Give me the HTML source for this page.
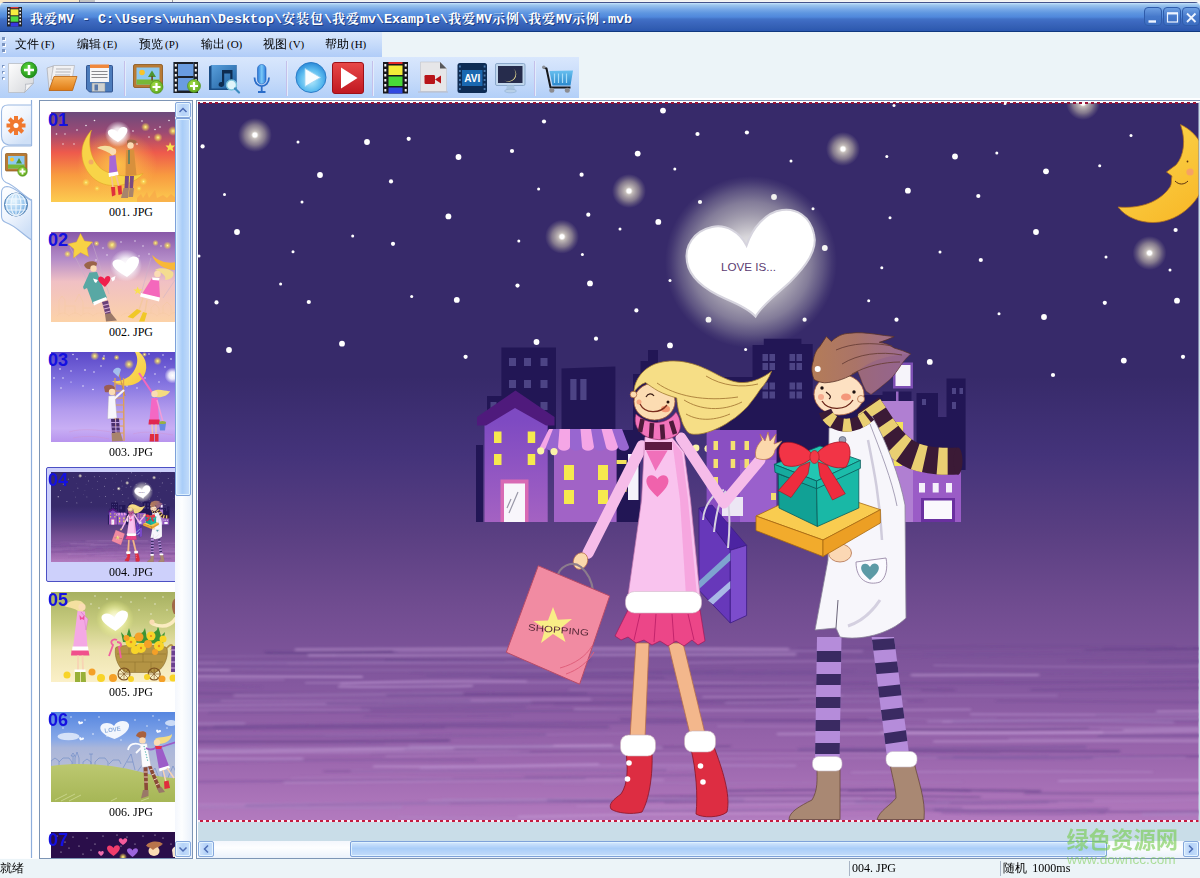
<!DOCTYPE html>
<html lang="zh-CN">
<head>
<meta charset="utf-8">
<title>我爱MV</title>
<style>
*{box-sizing:border-box;margin:0;padding:0}
html,body{width:1200px;height:878px;overflow:hidden;background:#ecf4f8}
body{position:relative;font-family:"Liberation Sans","WenQuanYi Zen Hei","Noto Sans CJK SC",sans-serif;font-size:12px;color:#000}
.abs{position:absolute}
#topstrip{left:0;top:0;width:1200px;height:3px;background:linear-gradient(#efefed,#fbfbfb)}
#topstrip i{position:absolute;top:0;height:3px;display:block}
#title{left:0;top:2px;width:1200px;height:30px;border-radius:5px 5px 0 0;
 background:linear-gradient(#44548c 0,#44548c 1px,#c8e4fc 1px,#9cc6ee 3px,#7aaae8 7px,#5e96e0 11px,#5088dc 15px,#4272c6 17px,#3c68c0 20px,#3460b4 25px,#2c58b0 28.500px,#103880 29px,#103880 30px);}
#title .t{position:absolute;left:30px;top:8.500px;white-space:nowrap;color:#fff;font-weight:bold;font-size:13px;letter-spacing:1px;line-height:18px;font-family:"Liberation Mono","Noto Serif CJK SC",serif;text-shadow:1px 1px 0 #1d3f86}
#title .t b{font-size:13.34px;font-weight:bold;letter-spacing:0}
.wb{position:absolute;top:5px;width:18px;height:19px;border-radius:4px;border:1px solid #2f5cab;background:linear-gradient(#6d9fe2,#4679cb 50%,#3c6dc0)}
#menubar{left:0;top:32px;width:382px;height:25px;background:linear-gradient(#dae8fd,#c6dbfa 50%,#b0ccf8)}
#menubar span{position:absolute;top:5px;font-size:12px;line-height:14px;white-space:nowrap}
#menubar span i{font-style:normal;font-family:"Liberation Serif",serif;font-size:11px;letter-spacing:0;margin-left:2px}
#status i{font-style:normal;font-family:"Liberation Serif",serif;font-size:12px}
#toolbar{left:0;top:57px;width:579px;height:41px;background:linear-gradient(#d9e7fd,#c6dbfa 55%,#b2cff8)}
.grip{position:absolute;left:2px;width:2.500px;height:2.500px;background:#7a94c0;box-shadow:1px 1px 0 #fff}
.sep{position:absolute;top:62px;width:1px;height:32px;background:#a9c1e6;box-shadow:1px 0 0 #e6f0fc}
#lefttabs{left:0;top:100px;width:39px;height:758px;background:#fff}
#thumbs{left:39px;top:100px;width:154px;height:759px;background:#fff;border:1px solid #7d95b5;overflow:hidden}
.th{position:absolute;left:11px;width:125px;height:90px;overflow:hidden}
.num{position:absolute;left:8px;font:bold 18px/18px "Liberation Sans",sans-serif;color:#1410e0}
.lab{position:absolute;left:56px;width:70px;text-align:center;font:12px/14px "Liberation Serif",serif;color:#000}
#vscroll{left:175px;top:101px;width:17px;height:757px;background:linear-gradient(90deg,#f4f7fd,#fdfeff 40%,#eaf1fb)}
.sbtn{position:absolute;border:1px solid #86a8dc;border-radius:2px;background:linear-gradient(90deg,#d4e6fc,#b4d2f8 50%,#c6defa);box-shadow:inset 0 0 0 1px #e4f4ff}
.sthumbv{position:absolute;border:1px solid #7ea2da;border-radius:2px;background:linear-gradient(90deg,#d6e8fd,#a9cdf8 45%,#c4dcfa);box-shadow:inset 0 0 0 1px #dff2ff}
.sthumbh{position:absolute;border:1px solid #7ea2da;border-radius:2px;background:linear-gradient(#d6e8fd,#a9cdf8 45%,#c4dcfa);box-shadow:inset 0 0 0 1px #dff2ff}
#hscroll{left:198px;top:841px;width:1002px;height:17px;background:linear-gradient(#f4f7fd,#fdfeff 40%,#eaf1fb)}
#main{left:196px;top:100px;width:1010px;height:759px;background:#c9dde8;border:1px solid #7d95b5;box-shadow:inset 1px 1px 0 #fff}
#status{left:0;top:859px;width:1200px;height:19px;background:#ecf4f8}
#status span{position:absolute;top:2px;font-size:12px;line-height:14px;white-space:nowrap}
#status b{position:absolute;top:2px;width:1px;height:15px;background:#a8b4c4}
</style>
</head>
<body>
<div id="topstrip" class="abs"><i style="left:0;width:79px;background:#f6e7c9"></i><i style="left:79px;width:1px;background:#8a8a8a"></i><i style="left:80px;width:15px;background:#c4c4c4"></i><i style="left:172px;width:1px;background:#9a9a9a"></i></div>
<div id="title" class="abs">
 <div class="t">我爱<b>MV - C:\Users\wuhan\Desktop\</b>安装包<b>\</b>我爱<b>mv\Example\</b>我爱<b>MV</b>示例<b>\</b>我爱<b>MV</b>示例<b>.mvb</b></div>
 <svg viewBox="0 0 16 20" width="16" height="20" style="position:absolute;left:7px;top:5px"><rect x="0" y="0" width="15" height="19.500" fill="#22242c"/><path d="M1 1.500h1.600v1.800h-1.600zM1 5h1.600v1.800h-1.600zM1 8.500h1.600v1.800h-1.600zM1 12h1.600v1.800h-1.600zM1 15.500h1.600v1.800h-1.600zM12.400 1.500h1.600v1.800h-1.600zM12.400 5h1.600v1.800h-1.600zM12.400 8.500h1.600v1.800h-1.600zM12.400 12h1.600v1.800h-1.600zM12.400 15.500h1.600v1.800h-1.600z" fill="#f0f0f0"/><rect x="3.600" y="0" width="7.800" height="1.300" fill="#e04040"/><rect x="3.600" y="2.300" width="7.800" height="6" fill="#f6ee40"/><rect x="3.600" y="9.300" width="7.800" height="5.400" fill="#50dc40"/><rect x="3.600" y="15.700" width="7.800" height="3.800" fill="#3838e0"/></svg><div class="wb" style="left:1144px"></div><div class="wb" style="left:1163px"></div><div class="wb" style="left:1182px"></div><svg viewBox="1144 2 56 30" width="56" height="30" style="position:absolute;left:1144px;top:0"><path d="M1148.500 21.500H1156" stroke="#eef4ff" stroke-width="2.400"/><rect x="1167.500" y="13.500" width="10" height="8.500" fill="none" stroke="#eef4ff" stroke-width="1.200"/><path d="M1167 13.300H1178" stroke="#eef4ff" stroke-width="2.200"/><path d="M1187 13.500L1195.500 22M1195.500 13.500L1187 22" stroke="#eef4ff" stroke-width="1.900"/></svg>
</div>
<div id="menubar" class="abs"><b class="grip" style="top:5px"></b><b class="grip" style="top:11px"></b><b class="grip" style="top:17px"></b>
 <span style="left:15px">文件<i>(F)</i></span><span style="left:77px">编辑<i>(E)</i></span><span style="left:139px">预览<i>(P)</i></span><span style="left:201px">输出<i>(O)</i></span><span style="left:263px">视图<i>(V)</i></span><span style="left:325px">帮助<i>(H)</i></span>
</div>
<div id="toolbar" class="abs"><svg viewBox="0 57 579 41" width="579" height="41" style="position:absolute;left:0;top:0;display:block">
<defs>
<linearGradient id="tg1" x1="0" y1="0" x2="1" y2="1"><stop offset="0" stop-color="#fefefe"/><stop offset="1" stop-color="#d4d6da"/></linearGradient>
<radialGradient id="tgreen" cx=".4" cy=".35" r=".7"><stop offset="0" stop-color="#5cd83c"/><stop offset="1" stop-color="#1a8a16"/></radialGradient>
<radialGradient id="tgreen2" cx=".4" cy=".35" r=".7"><stop offset="0" stop-color="#a8e048"/><stop offset="1" stop-color="#5aa41c"/></radialGradient>
<linearGradient id="tor" x1="0" y1="0" x2="0" y2="1"><stop offset="0" stop-color="#f8b45c"/><stop offset="1" stop-color="#e07c14"/></linearGradient>
<radialGradient id="tplay" cx=".5" cy=".6" r=".6"><stop offset="0" stop-color="#b8ecfc"/><stop offset=".6" stop-color="#5cbcf0"/><stop offset="1" stop-color="#2a8ad8"/></radialGradient>
<linearGradient id="tred" x1="0" y1="0" x2="0" y2="1"><stop offset="0" stop-color="#e84848"/><stop offset="1" stop-color="#c01820"/></linearGradient>
<linearGradient id="tmic" x1="0" y1="0" x2="1" y2="0"><stop offset="0" stop-color="#2a78d8"/><stop offset=".5" stop-color="#78c8f8"/><stop offset="1" stop-color="#2a78d8"/></linearGradient>
<linearGradient id="tbook" x1="0" y1="0" x2="1" y2="1"><stop offset="0" stop-color="#5aa0dc"/><stop offset="1" stop-color="#1c5c9c"/></linearGradient>
<linearGradient id="tcart" x1="0" y1="0" x2="0" y2="1"><stop offset="0" stop-color="#68c0f0"/><stop offset="1" stop-color="#2a88cc"/></linearGradient>
</defs>
<!-- grip -->
<g fill="#7a94c0"><rect x="2" y="65" width="2.500" height="2.500"/><rect x="2" y="71" width="2.500" height="2.500"/><rect x="2" y="77" width="2.500" height="2.500"/></g>
<g fill="#fff"><rect x="3" y="66" width="2" height="2"/><rect x="3" y="72" width="2" height="2"/><rect x="3" y="78" width="2" height="2"/></g>
<!-- separators -->
<path d="M124.500 61V96M286.500 61V96M372.500 61V96M534.500 61V96" stroke="#c4c0ea" stroke-width="1"/>
<path d="M125.500 61V96M287.500 61V96M373.500 61V96M535.500 61V96" stroke="#e2ecfc" stroke-width="1"/>
<!-- 1 new doc -->
<path d="M8.500 63.500H33.500V83L24.500 92.500H8.500Z" fill="url(#tg1)" stroke="#b8bcc4" stroke-width=".8"/>
<path d="M33.500 83C30 84 27 84.500 25.500 84C26 87 25.500 90 24.500 92.500Z" fill="#f4f4f6" stroke="#a8acb4" stroke-width=".7"/>
<circle cx="29" cy="70" r="8" fill="url(#tgreen)" stroke="#157a14" stroke-width=".6"/>
<path d="M24 70H34M29 65V75" stroke="#fff" stroke-width="2.600"/>
<!-- 2 open folder -->
<path d="M47 68L53 66L55 89H49Z" fill="#e8e8ea" stroke="#a0a0a4" stroke-width=".6"/>
<path d="M53.500 65.500L74.500 65.500L72 80H51Z" fill="#f2f2f4" stroke="#a8a8ac" stroke-width=".6"/>
<path d="M56 69H71M55.500 72H70.500M55 75H70" stroke="#b4b4b8" stroke-width="1"/>
<path d="M54 76.500H77L72.500 90.500H49Z" fill="url(#tor)" stroke="#b8600c" stroke-width=".8"/>
<!-- 3 floppy -->
<path d="M86.500 66.500Q86.500 65.500 87.500 65.500H111.500Q112.500 65.500 112.500 66.500V91Q112.500 92 111.500 92H89.500L86.500 89Z" fill="#4c7cbc" stroke="#2a4c88" stroke-width=".9"/>
<rect x="90" y="65" width="19" height="17" fill="#f6f6f8"/>
<rect x="90" y="64.500" width="19" height="3.500" fill="#f0883c"/>
<path d="M91.500 71.500H107.500M91.500 74.500H107.500M91.500 77.500H107.500" stroke="#5a5a60" stroke-width=".7"/>
<rect x="92" y="83" width="13" height="8.500" fill="#d0d2d0" stroke="#8a8c8c" stroke-width=".5"/>
<rect x="94.500" y="84.500" width="3.500" height="6" fill="#5a78a8"/>
<!-- 4 picture + -->
<rect x="133.500" y="64.500" width="29" height="23" rx="1.500" fill="#b87a34" stroke="#8a5418" stroke-width=".8"/>
<rect x="136.500" y="67.500" width="23" height="17" fill="#8cc8f0"/>
<rect x="136.500" y="79.500" width="23" height="5" fill="#78b838"/>
<circle cx="142" cy="72.500" r="2.800" fill="#f8c428"/>
<path d="M152 70.500L156 77H148Z" fill="#4c9430"/><rect x="151.300" y="76" width="1.600" height="4.500" fill="#6a4a20"/>
<circle cx="156.500" cy="87" r="6.500" fill="url(#tgreen2)" stroke="#4a8c14" stroke-width=".6"/>
<path d="M152.500 87H160.500M156.500 83V91" stroke="#fff" stroke-width="2.200"/>
<!-- 5 film + -->
<rect x="173.500" y="62" width="24.500" height="31" fill="#6a9ce0"/>
<rect x="173.500" y="62" width="4.500" height="31" fill="#1c2028"/><rect x="193.500" y="62" width="4.500" height="31" fill="#1c2028"/>
<path d="M174.800 64h2v2.500h-2zM174.800 69h2v2.500h-2zM174.800 74h2v2.500h-2zM174.800 79h2v2.500h-2zM174.800 84h2v2.500h-2zM174.800 89h2v2.500h-2zM194.800 64h2v2.500h-2zM194.800 69h2v2.500h-2zM194.800 74h2v2.500h-2zM194.800 79h2v2.500h-2z" fill="#f4f4f4"/>
<path d="M178 62h15.500v2h-15.500zM178 76h15.500v2h-15.500zM178 90.500h15.500v2.500h-15.500z" fill="#1c2028"/>
<circle cx="194" cy="86" r="6.500" fill="url(#tgreen2)" stroke="#4a8c14" stroke-width=".6"/>
<path d="M190 86H198M194 82V90" stroke="#fff" stroke-width="2.200"/>
<!-- 6 music book -->
<path d="M209 66.500L212 65H236.500V88.500L233.500 90H209Z" fill="#1a4c84"/>
<rect x="211.500" y="65" width="25" height="23.500" fill="url(#tbook)"/>
<path d="M222 70H232.500V82.500A2.800 2.500 0 1 1 230.300 80V73.500H224.200V84.500A2.800 2.500 0 1 1 222 82Z" fill="#0e2c50"/>
<circle cx="231.500" cy="85" r="5" fill="#dff4fa" stroke="#7cc4dc" stroke-width="1.400"/>
<path d="M235 88.500L239 92.500" stroke="#3a8cc0" stroke-width="2.200" stroke-linecap="round"/>
<!-- 7 mic -->
<path d="M254.500 77.500C254.500 89 269 89 269 77.500" stroke="#2a6cc8" stroke-width="1.800" fill="none"/>
<path d="M261.700 86.500V91.500M258 92H265.500" stroke="#2a6cc8" stroke-width="1.800"/>
<rect x="257.500" y="64.500" width="8.500" height="19.500" rx="4.250" fill="url(#tmic)" stroke="#1c5cb8" stroke-width=".6"/>
<!-- 8 play -->
<circle cx="311" cy="77.500" r="15" fill="url(#tplay)" stroke="#2a7cc8" stroke-width="1"/>
<path d="M305 68.500L320.500 77.500L305 86.500Z" fill="#f8fcff" stroke="#9cd4f4" stroke-width=".8"/>
<!-- 9 red play -->
<rect x="332.500" y="62.500" width="31" height="31" rx="2.500" fill="url(#tred)" stroke="#9c1018" stroke-width="1"/>
<path d="M341 67.500L357.500 78L341 88.500Z" fill="#fff"/>
<!-- 10 colour film -->
<rect x="383" y="62" width="25" height="31.500" fill="#18181c"/>
<path d="M384.300 64h2v2.500h-2zM384.300 69h2v2.500h-2zM384.300 74h2v2.500h-2zM384.300 79h2v2.500h-2zM384.300 84h2v2.500h-2zM384.300 89h2v2.500h-2zM404.700 64h2v2.500h-2zM404.700 69h2v2.500h-2zM404.700 74h2v2.500h-2zM404.700 79h2v2.500h-2zM404.700 84h2v2.500h-2zM404.700 89h2v2.500h-2z" fill="#f4f4f4"/>
<rect x="388.500" y="62" width="14" height="2" fill="#e02828"/>
<rect x="388.500" y="65.500" width="14" height="9.500" fill="#f4ec38"/>
<rect x="388.500" y="76.500" width="14" height="9.500" fill="#48d838"/>
<rect x="388.500" y="87.500" width="14" height="6" fill="#3048e0"/>
<!-- 11 video doc -->
<path d="M420.500 62H440L446.500 68.500V91.500H420.500Z" fill="#e6e6e8" stroke="#c4c4c8" stroke-width=".6"/>
<path d="M440 62L446.500 68.500H440Z" fill="#58585c"/>
<path d="M418 92H448" stroke="#b8bcc8" stroke-width="1"/>
<rect x="424.500" y="75" width="10.500" height="9" rx="1.200" fill="#b81418"/>
<path d="M435 79.500L441 75.500V83.500Z" fill="#b81418"/>
<!-- 12 AVI -->
<rect x="457.500" y="63" width="29.500" height="30" rx="2.500" fill="#0e2c54"/>
<rect x="462" y="70" width="20.500" height="16" fill="#1a68b0"/>
<path d="M459 65.500h1.800v2h-1.800zM459 70h1.800v2h-1.800zM459 74.500h1.800v2h-1.800zM459 79h1.800v2h-1.800zM459 83.500h1.800v2h-1.800zM459 88h1.800v2h-1.800zM483.700 65.500h1.800v2h-1.800zM483.700 70h1.800v2h-1.800zM483.700 74.500h1.800v2h-1.800zM483.700 79h1.800v2h-1.800zM483.700 83.500h1.800v2h-1.800zM483.700 88h1.800v2h-1.800z" fill="#4c7cb0"/>
<text x="472.300" y="82" text-anchor="middle" font-family="Liberation Sans,sans-serif" font-weight="bold" font-size="10.500" fill="#fff" textLength="16" lengthAdjust="spacingAndGlyphs">AVI</text>
<!-- 13 monitor -->
<rect x="495.500" y="63.500" width="29.500" height="22" rx="1.500" fill="#c0d6ec" stroke="#7c9cc0" stroke-width=".8"/>
<rect x="498" y="66" width="24.500" height="17" fill="#262c4c"/>
<path d="M513.500 68.500A7.200 7.200 0 1 1 504 80A7.500 7.500 0 0 0 513.500 68.500Z" fill="#f8ec98"/>
<path d="M507 85.500H514L515 90H506Z" fill="#a8c4e0"/>
<ellipse cx="510.500" cy="91" rx="6" ry="1.800" fill="#b8d0e8" stroke="#88a8cc" stroke-width=".5"/>
<!-- 14 cart -->
<path d="M543.500 67.500L546.500 68.500L550.500 87.500H570.500" stroke="#16181c" stroke-width="2" fill="none" stroke-linejoin="round"/>
<circle cx="543.800" cy="67.300" r="1.800" fill="#8c9098"/>
<path d="M549.500 71L573 70.500L570.500 85.500H552.500Z" fill="url(#tcart)"/>
<path d="M554.500 73.500V83M558.500 73.500V83M562.500 73.500V83M566.500 73.500V83" stroke="#a8dcf8" stroke-width="1.200"/>
<circle cx="551.800" cy="90.200" r="2.500" fill="#8c8c90"/><circle cx="567.300" cy="90.200" r="2.500" fill="#8c8c90"/>
</svg>
</div>
<div class="abs" style="left:0;top:98px;width:1200px;height:761px;background:#fdfeff"></div>
<div id="lefttabs" class="abs"><svg viewBox="0 100 39 758" width="39" height="758" style="position:absolute;left:0;top:0;display:block">
<defs>
<linearGradient id="lt1" x1="0" y1="0" x2=".6" y2="1"><stop offset="0" stop-color="#ffffff"/><stop offset=".55" stop-color="#eef4fd"/><stop offset="1" stop-color="#cfe0f7"/></linearGradient>
<radialGradient id="lglobe" cx=".4" cy=".35" r=".75"><stop offset="0" stop-color="#e8f6fe"/><stop offset=".6" stop-color="#9cc8ee"/><stop offset="1" stop-color="#5a90c8"/></radialGradient>
<radialGradient id="lgreen" cx=".4" cy=".35" r=".7"><stop offset="0" stop-color="#a8e048"/><stop offset="1" stop-color="#5aa41c"/></radialGradient>
</defs>
<path d="M31.500 100V858" stroke="#8eaedc" stroke-width="1.200" fill="none"/>
<!-- tab1 -->
<path d="M31.500 105H8Q1.500 105 1.500 111.500V136Q1.500 144 9 145H31.500Z" fill="url(#lt1)" stroke="#9ab8e2" stroke-width="1.100"/>
<!-- tab3 -->
<path d="M31.500 200.500C22 196 16 187 7 186.500Q1.500 187 1.500 192.500V216Q1.500 221 6 222.500C16 226 22 234 31.500 240Z" fill="url(#lt1)" stroke="#9ab8e2" stroke-width="1.100"/>
<!-- tab2 active -->
<path d="M33 146H8Q1.500 146 1.500 152V174Q1.500 180 6 182.500C16 186 22 195 33 200Z" fill="#fff"/>
<path d="M31.500 146H8Q1.500 146 1.500 152V174Q1.500 180 6 182.500C16 186 22 195 31.500 200" fill="none" stroke="#9ab8e2" stroke-width="1.100"/>
<!-- gear -->
<g transform="translate(16 125.500)" fill="#f0782e">
<g id="tooth"><rect x="-2" y="-9.500" width="4" height="5"/></g>
<use href="#tooth" transform="rotate(45)"/><use href="#tooth" transform="rotate(90)"/><use href="#tooth" transform="rotate(135)"/><use href="#tooth" transform="rotate(180)"/><use href="#tooth" transform="rotate(225)"/><use href="#tooth" transform="rotate(270)"/><use href="#tooth" transform="rotate(315)"/>
<circle r="6.200"/><circle r="2.500" fill="#fff"/>
</g>
<!-- picture -->
<rect x="5.500" y="153.500" width="21.500" height="17.500" rx="1" fill="#b87a34" stroke="#8a5418" stroke-width=".7"/>
<rect x="8" y="156" width="16.500" height="12.500" fill="#8cc8f0"/>
<rect x="8" y="164.500" width="16.500" height="4" fill="#78b838"/>
<circle cx="12" cy="159.500" r="2" fill="#f8c428"/>
<path d="M19 158L22 163.500H16Z" fill="#4c9430"/>
<circle cx="22.500" cy="171.500" r="4.800" fill="url(#lgreen)" stroke="#4a8c14" stroke-width=".5"/>
<path d="M19.500 171.500H25.500M22.500 168.500V174.500" stroke="#fff" stroke-width="1.800"/>
<!-- globe -->
<circle cx="16" cy="204.500" r="11.500" fill="url(#lglobe)" stroke="#4c7cb0" stroke-width="1"/>
<g fill="none" stroke="#f4faff" stroke-width="1.100" opacity=".9"><ellipse cx="16" cy="204.500" rx="5" ry="11"/><path d="M16 193.500V215.500M5 204.500H27M6.500 199H25.500M6.500 210H25.500"/><ellipse cx="16" cy="204.500" rx="9.500" ry="11"/></g>
</svg>
</div>
<div id="thumbs" class="abs"><div style="position:absolute;left:6px;top:366px;width:160px;height:115px;border:1px solid #4c50c4;border-radius:2px;background:#cdd0fb"></div>
<svg class="th" style="top:11px" width="125" height="90" viewBox="0 0 125 90" >
<defs><linearGradient id="t1g" x1="0" y1="0" x2="0" y2="1"><stop offset="0" stop-color="#6c4a7c"/><stop offset=".22" stop-color="#9a4a74"/><stop offset=".45" stop-color="#ee5a4c"/><stop offset=".7" stop-color="#f89a40"/><stop offset="1" stop-color="#fccc50"/></linearGradient>
<radialGradient id="t1r"><stop offset="0" stop-color="#fcc848" stop-opacity=".9"/><stop offset="1" stop-color="#fcc848" stop-opacity="0"/></radialGradient>
<radialGradient id="wg"><stop offset="0" stop-color="#fff"/><stop offset=".45" stop-color="#fff" stop-opacity=".85"/><stop offset="1" stop-color="#fff" stop-opacity="0"/></radialGradient>
<radialGradient id="yg"><stop offset="0" stop-color="#fff8a0"/><stop offset=".3" stop-color="#f8e060" stop-opacity=".8"/><stop offset="1" stop-color="#f8d040" stop-opacity="0"/></radialGradient></defs>
<rect width="125" height="90" fill="url(#t1g)"/>
<ellipse cx="66" cy="52" rx="40" ry="34" fill="url(#t1r)"/>
<g fill="#fff" opacity=".85"><circle cx="5.500" cy="22" r=".8"/><circle cx="14" cy="22" r=".7"/><circle cx="26" cy="18" r=".8"/><circle cx="35" cy="13.500" r=".8"/><circle cx="43.500" cy="8.500" r=".8"/><circle cx="12" cy="32" r=".7"/><circle cx="23" cy="32" r=".7"/><circle cx="82" cy="19" r=".8"/><circle cx="91" cy="9" r=".8"/><circle cx="104" cy="17.500" r=".8"/><circle cx="109" cy="15" r=".8"/><circle cx="98" cy="25" r=".7"/><circle cx="118" cy="8.500" r=".8"/><circle cx="86" cy="32" r=".8"/></g>
<circle cx="94.500" cy="15" r="4.500" fill="url(#yg)"/><circle cx="107" cy="25.500" r="4.500" fill="url(#yg)"/><circle cx="122" cy="19" r="5" fill="url(#yg)"/><circle cx="35" cy="70.500" r="4" fill="url(#yg)"/><circle cx="46" cy="76.500" r="3" fill="url(#yg)"/><circle cx="92.500" cy="69.500" r="4" fill="url(#yg)"/><circle cx="88" cy="76.500" r="3" fill="url(#yg)"/>
<path d="M40.500 18C36 32 40 50 52 58C62 64 80 66 92 61.500C84 72 64 77 50 71C34 64 27 44 33 30C35 25 38 21 40.500 18Z" fill="#f8d448" stroke="#d8a020" stroke-width=".5"/>
<circle cx="40" cy="50" r="2.500" fill="#f09a70" opacity=".7"/>
<circle cx="67" cy="22" r="13" fill="url(#wg)"/>
<path d="M67 30C60 26 56 23 57 19.500C58 16.500 63 16 66.500 20C68 15 73 13.500 76 16.500C78 20 73 26 67 30Z" fill="#fff"/>
<path d="M46 36C50 33 58 33 62 36C64 38 64 42 62 44C58 40 52 38 46 36Z" fill="#f4e0a0"/>
<circle cx="62" cy="39.500" r="3.200" fill="#fbdcb4"/>
<path d="M58.500 44L64.500 43L66.500 61L58 62.500Z" fill="#a868d4"/><path d="M57.500 61L67 59.500L67.500 63L58 65Z" fill="#fff"/>
<path d="M60.500 64.500L62 76M65 63.500L68 75" stroke="#f4c098" stroke-width="1.600"/>
<path d="M60 75L64 75L64.500 83L61 84.500ZM66.500 74L70.500 73.500L71 82L67.500 83Z" fill="#e0303c"/>
<path d="M76 29C78 27 84 27 86 30C84 32 80 33 76 33Z" fill="#a06848"/>
<circle cx="79.500" cy="33.500" r="3.200" fill="#fbdcb4"/>
<path d="M75 38L83 37.500L85.500 63L74.500 64Z" fill="#d8903c"/><path d="M78 38V52" stroke="#3a7a6a" stroke-width="1.300"/>
<path d="M74 64L78 64L77.500 76L73.500 76ZM79 64L83 64L82 76L78.500 76Z" fill="#7a4a80"/>
<path d="M72.500 76L78 76L77 86L70 86ZM78.500 76L83 76L82 85L77.500 85Z" fill="#a8846c"/>
<path d="M86 86L90 82L92 86L96 80L98 86L104 78L106 86L112 83L116 86L120 82L125 86V90H86Z" fill="#f8a848" opacity=".7"/>
<path d="M119 30L120.500 33.500L124 33.500L121.500 36L122.500 39.500L119 37.500L116 39.500L117 36L114.500 33.500L118 33.500Z" fill="#f8e050"/>
</svg>
<svg class="th" style="top:131px" width="125" height="90" viewBox="0 0 125 90" >
<defs><linearGradient id="t2g" x1="0" y1="0" x2="0" y2="1"><stop offset="0" stop-color="#8858a8"/><stop offset=".3" stop-color="#b48cc8"/><stop offset=".55" stop-color="#f0c0c4"/><stop offset="1" stop-color="#fcd2a8"/></linearGradient></defs>
<rect width="125" height="90" fill="url(#t2g)"/>
<g fill="#fff" opacity=".8"><circle cx="52" cy="16" r=".7"/><circle cx="56" cy="23" r=".7"/><circle cx="62" cy="12" r=".7"/><circle cx="70" cy="10" r=".7"/><circle cx="84" cy="9" r=".7"/><circle cx="92" cy="14" r=".7"/><circle cx="98" cy="22" r=".7"/><circle cx="110" cy="14" r=".7"/><circle cx="45" cy="28" r=".7"/><circle cx="88" cy="24" r=".7"/></g>
<circle cx="61" cy="13" r="5.500" fill="url(#yg)"/><circle cx="45.500" cy="11.500" r="3" fill="url(#yg)"/><circle cx="104.500" cy="11" r="3.200" fill="url(#yg)"/><circle cx="116.500" cy="13.500" r="4" fill="url(#yg)"/><circle cx="16.500" cy="22" r="3.500" fill="url(#yg)"/>
<g fill="none" stroke="#f4c8a0" stroke-width=".5" opacity=".9"><path d="M8 82V68L11 64L14 68V82M14 74H24V82M24 70L28 62L32 70V82M32 76H44M100 82V76L104 72L108 76V82M112 82V74L116 70L120 74V82"/><path d="M6 84C10 80 14 80 18 84C22 80 26 80 30 84C34 80 38 80 42 84C46 80 50 80 54 84M70 84C74 80 78 80 82 84C86 80 90 80 94 84C98 80 102 80 106 84C110 80 114 80 118 84C122 80 124 80 125 82"/></g>
<circle cx="75" cy="33.500" r="16" fill="url(#wg)"/>
<path d="M76 45C68 40 61 36 61.500 31C62.500 26.500 70 26 74.500 31.500C77 24.500 84 22.500 87.500 26.500C90 32 83 40 76 45Z" fill="#fff"/>
<path d="M19 15L39 54M41 10L58 62M100 26L90 62M124 48L112 66" stroke="#c8b0c8" stroke-width=".5"/>
<path d="M29.500 1.500L33.500 9L41.500 10L36 16L37.500 24.500L29.500 20.500L22.500 26L23 17L17 12L25.500 10Z" fill="#f8d244" stroke="#e8b020" stroke-width=".4"/>
<path d="M101 23C108 30 118 32 125 30V38C114 38 104 32 101 23Z" fill="#f8b838"/>
<path d="M33 33C35 29 43 28 46 31C46 35 42 37 38 37C35 37 34 35 33 33Z" fill="#9a6448"/>
<circle cx="42.500" cy="36.500" r="3.200" fill="#fbdcb4"/>
<path d="M38.500 40.500L46 40L56 66L42 72L36 56L33 57.500L32 55Z" fill="#58a8a4"/><path d="M42 70L55 65L56 67.500L43 73.500Z" fill="#fff"/>
<path d="M51 70L57 68.500L60 82L54.500 83Z" fill="#6a4078"/><path d="M52 73.500L58 72M53 77L59 75.500M54 80.500L59.500 79" stroke="#e8c0e0" stroke-width=".9"/>
<path d="M54 82L60 81L66 88.500L55 89.500Z" fill="#9a7868"/>
<path d="M54 55C49 51 46 48 47.500 45.500C49 43.500 52 44.500 53.500 47C54.500 44 57.500 43 59 45C60.500 48 57 52 54 55Z" fill="#f0204c"/>
<path d="M47 48L42 46.500L43.500 50L45 51ZM60 46L64.500 44L63.500 48L61.500 49.500Z" fill="#fff"/>
<path d="M104 38C108 35 118 36 122 40C124 44 120 48 114 48C116 44 110 40 104 38Z" fill="#f4dc90"/>
<circle cx="106.500" cy="42" r="3.300" fill="#fbdcb4"/>
<path d="M101 46L108 46.500L109 66L91 62Z" fill="#f468bc"/><path d="M90 61L109 65.500L108 69.500L89 64.500Z" fill="#fff"/><path d="M101 45.500L108.500 46L108 48.500L101.500 48Z" fill="#fff"/>
<path d="M92 66L88 78M96 68L94 80" stroke="#f4c8a0" stroke-width="1.500"/>
<path d="M86 77L90.500 79L82 86.500L76.500 85ZM92 80L96 81L93.500 89.500L88 89.500Z" fill="#f0c828"/>
<path d="M86.500 54.500L88 57.500L91 57.500L88.500 59.500L89.500 62.500L86.500 60.500L84 62.500L85 59.500L82.500 57.500L85.500 57.500Z" fill="#f8e050"/>
</svg>
<svg class="th" style="top:251px" width="125" height="90" viewBox="0 0 125 90" >
<defs><linearGradient id="t3g" x1="0" y1="0" x2="0" y2="1"><stop offset="0" stop-color="#5a48c8"/><stop offset=".35" stop-color="#8474e0"/><stop offset=".65" stop-color="#b49cee"/><stop offset=".85" stop-color="#c8aef4"/><stop offset="1" stop-color="#b894ee"/></linearGradient>
<linearGradient id="t3m" x1="0" y1="0" x2="1" y2="1"><stop offset="0" stop-color="#fbe878"/><stop offset="1" stop-color="#f8c838"/></linearGradient></defs>
<rect width="125" height="90" fill="url(#t3g)"/>
<g fill="#fff" opacity=".9"><circle cx="3" cy="26" r=".8"/><circle cx="9" cy="17" r=".8"/><circle cx="12" cy="26" r=".7"/><circle cx="20" cy="19" r=".7"/><circle cx="26" cy="7" r=".8"/><circle cx="34" cy="18" r=".8"/><circle cx="22" cy="2.500" r=".7"/><circle cx="43" cy="20" r=".7"/><circle cx="10" cy="36" r=".7"/><circle cx="32" cy="34" r=".7"/><circle cx="42" cy="37.500" r=".8"/><circle cx="53" cy="4" r=".7"/><circle cx="50" cy="14" r=".7"/><circle cx="98" cy="2" r=".7"/><circle cx="112" cy="3" r=".7"/><circle cx="120" cy="7" r=".8"/><circle cx="104" cy="22" r=".7"/><circle cx="114" cy="15" r=".7"/><circle cx="94" cy="26" r=".7"/><circle cx="86" cy="36" r=".7"/><circle cx="20" cy="30" r=".6"/><circle cx="76" cy="34" r=".7"/><circle cx="108" cy="30" r=".7"/></g>
<circle cx="43.700" cy="4" r="4.500" fill="url(#yg)"/><circle cx="78" cy="12.300" r="5" fill="url(#yg)"/><circle cx="106.600" cy="9" r="4.200" fill="url(#yg)"/><circle cx="65.600" cy="5.500" r="3" fill="url(#yg)"/><circle cx="52.500" cy="6.500" r="2.200" fill="url(#yg)"/><circle cx="93.500" cy="2.500" r="2.500" fill="url(#yg)"/>
<circle cx="121.500" cy="23.500" r="8" fill="url(#wg)"/>
<path d="M88 0C96 6 98 18 91 27C84 35 70 36 61 29C70 30 80 26 84 17C87 11 87 5 84 0Z" fill="url(#t3m)"/>
<g fill="none" stroke="#e0a050" stroke-width="1.300"><path d="M64 26L63.500 89M72.500 26L73 89"/><path d="M64 32H72.500M64 39H72.500M64 46H72.500M64 53H72.500M64 60H72.500M64 67H72.500M64 74H72.500M64 81H72.500" stroke-width="1"/></g>
<path d="M74 44L67.500 20" stroke="#c89040" stroke-width=".9"/>
<path d="M62 20C62 16 68 14 70 17.500L67.500 25Z" fill="#a8c8f0" opacity=".9"/>
<path d="M53 35C55 32 62 32 64 36C63 39 58 41 54 40Z" fill="#9a5c54"/>
<circle cx="61" cy="40" r="3.200" fill="#fbdcb4"/>
<path d="M57.500 44L64 43.500L66 66L56.500 67Z" fill="#f8f6fc" stroke="#a8a0b8" stroke-width=".4"/>
<path d="M63 47L73 38" stroke="#f8f6fc" stroke-width="2.200"/>
<path d="M60 67L64 67L64.500 81L61 81ZM65 66.500L68 66.500L69 80.500L65.500 80.500Z" fill="#4a2e6c"/><path d="M60 70.500H68.500M60.500 75H69M60.500 79H69" stroke="#c8a8e8" stroke-width=".9"/>
<path d="M60.500 81L69.500 80.500L72 89L61 89.500Z" fill="#a8846c"/>
<path d="M102 42L88 21" stroke="#f468bc" stroke-width="2"/>
<path d="M103 39C108 36 116 40 119 39C117 44 110 46 105 45Z" fill="#f4dc80"/>
<circle cx="103.500" cy="42" r="3.200" fill="#fbdcb4"/>
<path d="M100.500 46L106.500 46L108 68L98.500 68Z" fill="#f468c4"/>
<path d="M98 67.500L108.500 67.500L109 72.500L97.500 72.500Z" fill="#e02850"/>
<path d="M106 48L112 70" stroke="#f49cd8" stroke-width="1.400"/>
<path d="M101 72.500L101.500 82M105 72.500L105 82" stroke="#f4c8a8" stroke-width="1.300"/>
<path d="M99 82L103 82L103 89.500L98.500 89.500ZM103.800 82L107.500 82L107.500 89.500L103.800 89.500Z" fill="#e02c3c"/>
<path d="M108 71L115 71L114 78.500L109 78.500Z" fill="#6888e0"/><ellipse cx="111.500" cy="70.500" rx="3.500" ry="1.600" fill="#98b040"/>
<g fill="none" stroke="#d090c8" stroke-width=".5" opacity=".7"><path d="M18 80C30 76 48 78 60 80M22 86C36 83 50 85 58 87M82 82C92 79 104 80 122 83"/></g>
</svg>
<svg class="th" style="top:371px" width="125" height="90" viewBox="23 104 994.400 716" preserveAspectRatio="none"><rect x="20" y="104" width="1000" height="716" fill="url(#sky)"/><g fill="#fff"><circle cx="60" cy="130" r="4"/><circle cx="120" cy="200" r="3.500"/><circle cx="80" cy="300" r="4"/><circle cx="160" cy="160" r="3"/><circle cx="150" cy="340" r="3.500"/><circle cx="100" cy="250" r="3"/></g><use href="#picg"/></svg>
<svg class="th" style="top:491px" width="125" height="90" viewBox="0 0 125 90" >
<defs><linearGradient id="t5g" x1="0" y1="0" x2="0" y2="1"><stop offset="0" stop-color="#a6b060"/><stop offset=".35" stop-color="#c8cc80"/><stop offset=".65" stop-color="#ece4b0"/><stop offset="1" stop-color="#fbf0c8"/></linearGradient>
<radialGradient id="t5h"><stop offset="0" stop-color="#fff"/><stop offset=".4" stop-color="#f8f8c0" stop-opacity=".85"/><stop offset="1" stop-color="#e8f080" stop-opacity="0"/></radialGradient></defs>
<rect width="125" height="90" fill="url(#t5g)"/>
<g fill="#fff" opacity=".75"><circle cx="44" cy="4" r=".7"/><circle cx="56" cy="7" r=".7"/><circle cx="70" cy="5" r=".7"/><circle cx="80" cy="10" r=".7"/><circle cx="94" cy="6" r=".7"/><circle cx="104" cy="12" r=".7"/><circle cx="112" cy="5" r=".7"/><circle cx="88" cy="18" r=".7"/><circle cx="48" cy="16" r=".7"/><circle cx="100" cy="22" r=".7"/><circle cx="40" cy="12" r=".7"/><circle cx="116" cy="18" r=".7"/></g>
<circle cx="64" cy="27" r="19" fill="url(#t5h)"/>
<path d="M64.500 39C57 34 50 30 50.500 25C51.500 20.500 59 20 63.500 25.500C66 18.500 73 16.500 76.500 20.500C79 26 72 34 64.500 39Z" fill="#fff"/>
<path d="M13 14C18 8 30 6 33 12C34 16 32 20 30 22C26 16 18 16 13 14Z" fill="#f4e0a0"/>
<circle cx="31" cy="15" r="3.600" fill="#fbdcb4"/>
<path d="M26.500 19L34 19.500L36.500 56L22 56Z" fill="#f4a8e4"/>
<path d="M30 20L37 27L35 38L33 24Z" fill="#f4a8e4" stroke="#d078c0" stroke-width=".4"/>
<path d="M28.500 23L31 26L33.500 23L33 28L31 27L29 28Z" fill="#f0509c"/>
<path d="M21.500 54.500L37 54.500L37.500 59L21 59Z" fill="#fff"/>
<path d="M20.500 58.500L37.500 58.500L38.500 63.500L20 63.500Z" fill="#f0508c"/>
<path d="M27 63.500L27 78M31.500 63.500L32 78" stroke="#f8d4b4" stroke-width="1.800"/>
<path d="M23.500 77.500L34.500 77.500L34.500 80L23.500 80Z" fill="#fff"/>
<path d="M24 80L29 80L29 90L24 90ZM29.800 80L34.500 80L35 90L29.800 90Z" fill="#98b038"/>
<path d="M64.500 56C64.500 52 114 52 116 56C118 66 112 78 104 80.500L76 80.500C68 78 63 66 64.500 56Z" fill="#b49444" stroke="#7a5c20" stroke-width=".5"/>
<path d="M66 62H115M68 70H112M78 56V62M92 62V70M104 56V62M84 70V80M100 70V80" stroke="#8a6c28" stroke-width=".5" fill="none"/>
<path d="M116 56C120 50 124 54 120 58" fill="none" stroke="#b49444" stroke-width="1.600"/>
<g fill="none" stroke="#7a5020" stroke-width="1.100"><circle cx="73" cy="82" r="6"/><circle cx="103.200" cy="82" r="6"/></g><path d="M67 82H79M73 76V88M97.200 82H109.200M103.200 76V88M69 78L77 86M77 78L69 86M99 78L107 86M107 78L99 86" stroke="#7a5020" stroke-width=".6"/>
<path d="M72 50L70 40L75 46L78 36L81 46L92 40L94 36L96 46L106 38L107 34L110 44L114 40L112 52Z" fill="#3c9434"/>
<g fill="#f8d428"><circle cx="80" cy="50" r="5.500"/><circle cx="90" cy="56" r="5"/><circle cx="100" cy="44" r="4.500"/><circle cx="108" cy="54" r="5"/><circle cx="84" cy="58" r="4"/><circle cx="112" cy="47" r="3.500"/></g>
<g fill="#f4a028"><circle cx="88" cy="45" r="4.500"/><circle cx="97" cy="52" r="4"/><circle cx="75.500" cy="46" r="3"/><circle cx="104" cy="60" r="3"/></g>
<g fill="#e88820"><circle cx="80" cy="50" r="1.300"/><circle cx="90" cy="56" r="1.200"/><circle cx="108" cy="54" r="1.200"/><circle cx="100" cy="44" r="1.100"/></g>
<path d="M66 48C62 46 58 50 62 53L58 64M66 50C70 50 72 54 68 55L70 66" stroke="#f060a0" stroke-width="1.800" fill="none"/>
<path d="M125 6C120 8 120 16 123 22L125 22Z" fill="#a06848"/>
<path d="M125 26C120 34 112 36 102 32L100 30" stroke="#fbecc0" stroke-width="3.400" fill="none"/><circle cx="101" cy="30" r="2.600" fill="#fbdcb4"/>
<path d="M120.500 54L125 54V80L120 80Z" fill="#6a4090"/><path d="M120 58H125M120 64H125M120 70H125M120 76H125" stroke="#d8b0e8" stroke-width="1.200"/>
<g fill="#f8d428"><circle cx="16" cy="83" r="3.500"/><circle cx="50" cy="86" r="4"/><circle cx="80" cy="87" r="3"/><circle cx="96" cy="85" r="3"/><circle cx="122" cy="86" r="3.500"/></g>
<g fill="#f4a028"><circle cx="41" cy="80" r="3.500"/><circle cx="62" cy="86" r="4"/><circle cx="111" cy="87" r="3.500"/></g>
</svg>
<svg class="th" style="top:611px" width="125" height="90" viewBox="0 0 125 90" >
<defs><linearGradient id="t6g" x1="0" y1="0" x2="0" y2="1"><stop offset="0" stop-color="#5686e0"/><stop offset=".3" stop-color="#86a8e8"/><stop offset=".4" stop-color="#aab6da"/><stop offset=".6" stop-color="#b4bcd8"/><stop offset="1" stop-color="#b4bcd8"/></linearGradient>
<linearGradient id="t6gr" x1="0" y1="0" x2="0" y2="1"><stop offset="0" stop-color="#bcc870"/><stop offset="1" stop-color="#a6b656"/></linearGradient></defs>
<rect width="125" height="90" fill="url(#t6g)"/>
<g fill="#fff" opacity=".85"><circle cx="20" cy="5" r=".7"/><circle cx="34" cy="8" r=".7"/><circle cx="48" cy="5" r=".7"/><circle cx="56" cy="24" r=".7"/><circle cx="84" cy="8" r=".7"/><circle cx="96" cy="14" r=".7"/><circle cx="108" cy="8" r=".7"/><circle cx="42" cy="22" r=".8"/><circle cx="90" cy="20" r=".7"/><circle cx="70" cy="28" r=".7"/><circle cx="12" cy="16" r=".7"/><circle cx="116" cy="16" r=".7"/><circle cx="102" cy="4" r=".7"/></g>
<ellipse cx="17.500" cy="24.500" rx="11" ry="3.800" fill="#e4ecfa" opacity=".85"/><ellipse cx="120" cy="11" rx="6" ry="3" fill="#e4ecfa" opacity=".8"/>
<path d="M63.500 27C54 24 48 19 49.500 14.500C51 10 60 10 63 14C66 8 76 7.500 78 12.500C79 18 72 24 63.500 27Z" fill="#f2f6fd"/>
<text x="53.500" y="19.500" font-family="Liberation Sans,sans-serif" font-size="6" font-weight="bold" fill="#8cacdc" transform="rotate(-8 63 18)">LOVE</text>
<path d="M28.500 12.500C27 11 26.500 9.500 28 9C29 9 29.500 10 29.500 10.500C30 9.500 31.500 9 32 10C32.500 11.500 30.500 12 28.500 12.500ZM29.500 28.500C28 27 27.500 25.500 29 25C30 25 30.500 26 30.500 26.500C31 25.500 32.500 25 33 26C33.500 27.500 31.500 28 29.500 28.500ZM106.500 21C105 19.500 104.500 18 106 17.500C107 17.500 107.500 18.500 107.500 19C108 18 109.500 17.500 110 18.500C110.500 20 108.500 20.500 106.500 21Z" fill="#f4f8ff"/>
<g fill="none" stroke="#6484c4" stroke-width=".55"><path d="M0 54V49L4 46L8 49V54M8 50L12 46H18L21 50V54M22 52V44M20 44L22 41L24 44ZM24 54V46L26 40L28 46V54M32 54V50L36 47L40 50V54M40 52V42M38 42H42M44 54V50L48 46H54L57 50V54M58 52L62 48H68L70 52M72 56L80 42L84 58M76 50H82M86 60L92 52L96 62M98 64L104 56L108 66M112 66V58M116 68L122 54L125 60"/></g>
<path d="M0 54C30 50 60 52 90 60C104 64 116 66 125 66V90H0Z" fill="url(#t6gr)"/>
<path d="M4 88L16 82M10 89L24 82M18 89L30 83M60 89L66 86M90 89L98 86" stroke="#dce4a8" stroke-width=".6"/>
<path d="M85 24C86 19 92 18 95 20.500C96 24 94 27 92 28C90 26 87 25 85 24Z" fill="#a8603c"/>
<circle cx="91.500" cy="28.500" r="3.200" fill="#fbdcb4"/>
<path d="M89 32L96 31.500L100 54L91 55.500Z" fill="#fbfbfd" stroke="#a8a8b8" stroke-width=".4"/>
<path d="M90 33C84 30 78 32 77 38" stroke="#fbfbfd" stroke-width="1.800" fill="none"/><path d="M90 36L85 41" stroke="#fbfbfd" stroke-width="1.800"/>
<path d="M93 34L97 50" stroke="#38a8a0" stroke-width="1" stroke-dasharray="1.200 1.600"/>
<path d="M92.500 55.500L96.500 55L97 78L93.500 78ZM97 54.500L100.500 54L110 76L106.500 77.500Z" fill="#8a4a38"/><path d="M92.800 60H96.600M93 65H96.800M93.200 70H97M98.500 58L102 57M100.500 63L104 61.500M102.500 68L106 66.500M104.500 73L108 71.500" stroke="#f0d0c0" stroke-width="1"/>
<path d="M92 78L97.500 78L97.500 84L90 86.500ZM106 76.500L110.500 75L114 80L108 81Z" fill="#9a7868"/>
<path d="M104 27C108 24 118 26 121 22C121 28 114 32 108 32Z" fill="#f4dc80"/>
<circle cx="106" cy="30.500" r="3.200" fill="#fbdcb4"/>
<path d="M104 34.500L110.500 34.500L118 54L108 57Z" fill="#9c5cc8"/><path d="M108 56.500L118 53.500L119 56L108.500 59.500Z" fill="#fff"/>
<path d="M106 35C102 38 98 38 95 36M110 35L125 30" stroke="#9c5cc8" stroke-width="1.800" fill="none"/>
<path d="M104 34L111 34L110 37L105 37Z" fill="#e83048"/>
<path d="M112 58L115 70M116 56L123 66" stroke="#f8d4b4" stroke-width="1.400"/>
<path d="M113 69.500L117.500 68.500L119 76L113.500 77Z" fill="#e02c3c"/>
</svg>
<svg class="th" style="top:731px" width="125" height="90" viewBox="0 0 125 90" >
<rect width="125" height="90" fill="#2a0e4a"/>
<g fill="#fff" opacity=".8"><circle cx="6" cy="4" r=".6"/><circle cx="14" cy="10" r=".6"/><circle cx="22" cy="5" r=".6"/><circle cx="28" cy="14" r=".6"/><circle cx="36" cy="6" r=".6"/><circle cx="44" cy="12" r=".6"/><circle cx="52" cy="4" r=".6"/><circle cx="58" cy="16" r=".6"/><circle cx="76" cy="5" r=".6"/><circle cx="84" cy="12" r=".6"/><circle cx="92" cy="4" r=".6"/><circle cx="112" cy="6" r=".6"/><circle cx="120" cy="12" r=".6"/><circle cx="10" cy="20" r=".6"/><circle cx="32" cy="22" r=".6"/><circle cx="70" cy="14" r=".6"/><circle cx="18" cy="16" r=".6"/><circle cx="40" cy="18" r=".6"/><circle cx="104" cy="3" r=".6"/><circle cx="66" cy="3" r=".6"/></g>
<path d="M62.500 24C57 20 55 17 56.500 14.500C58 12.500 61 13.500 62.500 16C63.500 13 67 12.500 68.500 14.500C70 17 67 21 62.500 24Z" fill="#f03c6c"/>
<path d="M72 13C68.500 10.500 67 8.500 68 7C69 5.500 71 6 72 8C72.500 6 75 5.500 76 7C77 9 75 11 72 13Z" fill="#f45c9c"/>
<path d="M81.500 25C77 21.500 75 19 76.500 17C78 15.500 80.500 16 81.500 18.500C82.500 16 85.500 15.500 86.500 17C88 19.500 85.500 22 81.500 25Z" fill="#9c64dc"/>
<path d="M50 24C47.500 22 46.500 20.500 47.500 19.500C48.500 18.500 49.500 19 50 20C50.500 19 52 18.500 52.500 19.500C53.500 21 52 22.500 50 24Z" fill="#f06cac"/>
<circle cx="72" cy="25" r="4" fill="url(#yg)"/>
<path d="M95 14C97 9 108 8 112 12C110 13 108 14 107 16C103 14 98 15 95 14Z" fill="#b8744c"/>
<ellipse cx="103" cy="19" rx="5.500" ry="5" fill="#fbdcb4"/>
<path d="M96 15C98 11 108 10 111 13C108 14 104 16 102 18C100 16 98 15 96 15Z" fill="#b8744c"/>
<path d="M121 18C122 15 125 14 125 14V25H122Z" fill="#f8e8d0"/>
</svg>
<div class="num" style="top:10px">01</div>
<div class="lab" style="top:104px">001. JPG</div>
<div class="num" style="top:130px">02</div>
<div class="lab" style="top:224px">002. JPG</div>
<div class="num" style="top:250px">03</div>
<div class="lab" style="top:344px">003. JPG</div>
<div class="num" style="top:370px">04</div>
<div class="lab" style="top:464px">004. JPG</div>
<div class="num" style="top:490px">05</div>
<div class="lab" style="top:584px">005. JPG</div>
<div class="num" style="top:610px">06</div>
<div class="lab" style="top:704px">006. JPG</div>
<div class="num" style="top:730px">07</div></div>
<div id="vscroll" class="abs"><div class="sbtn" style="left:0;top:1px;width:16px;height:16px"></div><div class="sthumbv" style="left:0;top:17px;width:16px;height:378px"></div><div class="sbtn" style="left:0;top:740px;width:16px;height:16px"></div>
<svg width="17" height="757" viewBox="0 0 17 757" style="position:absolute;left:0;top:0"><path d="M4.500 11L8 7.500L11.500 11M4.500 746.500L8 750L11.500 746.500" fill="none" stroke="#4c6cb4" stroke-width="1.500"/></svg></div>
<div id="main" class="abs"></div>
<div id="hscroll" class="abs"><div class="sbtn" style="left:0;top:0;width:16px;height:16px"></div><div class="sthumbh" style="left:152px;top:0;width:757px;height:16px"></div><div class="sbtn" style="left:985px;top:0;width:16px;height:16px"></div>
<svg width="1002" height="17" viewBox="0 0 1002 17" style="position:absolute;left:0;top:0"><path d="M10 4.500L6.500 8L10 11.500M991 4.500L994.500 8L991 11.500" fill="none" stroke="#4c6cb4" stroke-width="1.500"/></svg></div>
<svg id="pic" viewBox="198 102 1001 720" width="1001" height="720" style="position:absolute;left:198px;top:102px;display:block">
<defs>
<linearGradient id="sky" x1="0" y1="104" x2="0" y2="820" gradientUnits="userSpaceOnUse">
<stop offset="0" stop-color="#372a6a"/><stop offset=".38" stop-color="#372a6a"/><stop offset=".49" stop-color="#44337a"/><stop offset=".60" stop-color="#5a3f82"/><stop offset=".70" stop-color="#704c90"/><stop offset=".81" stop-color="#84589f"/><stop offset=".91" stop-color="#9a66ad"/><stop offset="1" stop-color="#b27abe"/>
</linearGradient>
<radialGradient id="glow"><stop offset="0" stop-color="#fff"/><stop offset=".12" stop-color="#fff"/><stop offset=".22" stop-color="#e6e0cc" stop-opacity=".8"/><stop offset=".6" stop-color="#cfc6b0" stop-opacity=".5"/><stop offset=".85" stop-color="#b0a8a0" stop-opacity=".2"/><stop offset="1" stop-color="#a8a0a0" stop-opacity="0"/></radialGradient>
<radialGradient id="hglow"><stop offset="0" stop-color="#fff" stop-opacity=".95"/><stop offset=".3" stop-color="#f4f4ee" stop-opacity=".85"/><stop offset=".55" stop-color="#e4e4d8" stop-opacity=".6"/><stop offset=".7" stop-color="#dcdcd0" stop-opacity=".46"/><stop offset=".84" stop-color="#d0d0c8" stop-opacity=".26"/><stop offset=".94" stop-color="#c8c8c4" stop-opacity=".08"/><stop offset="1" stop-color="#c0c0c0" stop-opacity="0"/></radialGradient><linearGradient id="bhair" x1="812" y1="0" x2="909" y2="0" gradientUnits="userSpaceOnUse"><stop offset="0" stop-color="#b47c58"/><stop offset=".45" stop-color="#aa7468"/><stop offset="1" stop-color="#9a6a98"/></linearGradient>
<linearGradient id="moon" x1="1120" y1="130" x2="1190" y2="220" gradientUnits="userSpaceOnUse"><stop offset="0" stop-color="#fbd850"/><stop offset="1" stop-color="#f8b828"/></linearGradient>
<linearGradient id="house" x1="0" y1="420" x2="0" y2="522" gradientUnits="userSpaceOnUse"><stop offset="0" stop-color="#7e4ac2"/><stop offset="1" stop-color="#a462c2"/></linearGradient>
<filter id="bl1" x="-5%" y="-50%" width="110%" height="200%"><feGaussianBlur stdDeviation="1.6 1"/></filter><filter id="bl2" x="-1%" y="-1%" width="102%" height="102%"><feGaussianBlur stdDeviation=".45"/></filter><clipPath id="clipimg"><rect x="198" y="103" width="1000.5" height="717"/></clipPath>
</defs>
<rect x="198" y="103" width="1000.5" height="717" fill="url(#sky)"/>
<g clip-path="url(#clipimg)"><g id="picg">
<!-- ground streaks -->
<g fill="none" stroke-linecap="round" filter="url(#bl1)">
<path d="M726 703.1Q816 702.3 906 701.1" stroke="#b48cca" stroke-width="1.6" opacity="0.52"/>
<path d="M218 662.6Q362 659.5 505 661.7" stroke="#6c4892" stroke-width="2.4" opacity="0.41"/>
<path d="M-19 658.5Q158 657.4 336 655.5" stroke="#a884c2" stroke-width="1.4" opacity="0.29"/>
<path d="M144 700.4Q367 700.7 590 699.2" stroke="#b48cca" stroke-width="2.4" opacity="0.42"/>
<path d="M882 732.4Q1049 734.2 1215 730.9" stroke="#c09ad4" stroke-width="2.6" opacity="0.49"/>
<path d="M570 689.5Q745 691.2 920 690.2" stroke="#b48cca" stroke-width="2.0" opacity="0.29"/>
<path d="M525 776.7Q616 776.7 706 774.7" stroke="#745098" stroke-width="1.9" opacity="0.34"/>
<path d="M5 732.4Q225 728.8 444 727.8" stroke="#64408a" stroke-width="2.6" opacity="0.27"/>
<path d="M938 758.0Q1196 755.4 1455 754.2" stroke="#64408a" stroke-width="1.9" opacity="0.49"/>
<path d="M190 751.9Q349 752.1 508 749.5" stroke="#a884c2" stroke-width="2.1" opacity="0.27"/>
<path d="M934 741.4Q1171 740.5 1408 742.3" stroke="#caa6dc" stroke-width="2.0" opacity="0.45"/>
<path d="M107 687.2Q184 684.2 261 687.0" stroke="#6c4892" stroke-width="1.2" opacity="0.32"/>
<path d="M621 719.2Q755 720.8 889 720.1" stroke="#64408a" stroke-width="2.9" opacity="0.36"/>
<path d="M612 809.8Q808 808.1 1005 807.6" stroke="#a884c2" stroke-width="1.3" opacity="0.27"/>
<path d="M341 683.5Q433 679.5 526 681.4" stroke="#b48cca" stroke-width="2.4" opacity="0.53"/>
<path d="M386 660.0Q487 662.5 589 659.6" stroke="#5c3a82" stroke-width="2.9" opacity="0.28"/>
<path d="M519 816.8Q672 812.8 825 813.6" stroke="#caa6dc" stroke-width="2.6" opacity="0.39"/>
<path d="M1099 735.8Q1200 736.3 1301 734.5" stroke="#745098" stroke-width="2.9" opacity="0.49"/>
<path d="M374 766.4Q486 766.9 598 764.3" stroke="#caa6dc" stroke-width="2.4" opacity="0.44"/>
<path d="M162 782.0Q373 779.7 585 778.6" stroke="#6c4892" stroke-width="1.9" opacity="0.38"/>
<path d="M266 652.9Q332 653.6 397 651.9" stroke="#5c3a82" stroke-width="2.6" opacity="0.45"/>
<path d="M20 707.4Q275 704.6 530 702.1" stroke="#a884c2" stroke-width="3.0" opacity="0.44"/>
<path d="M728 790.9Q884 788.5 1040 791.1" stroke="#5c3a82" stroke-width="2.7" opacity="0.45"/>
<path d="M897 729.3Q993 730.4 1088 728.0" stroke="#5c3a82" stroke-width="2.7" opacity="0.37"/>
<path d="M1149 662.4Q1241 661.9 1333 660.3" stroke="#6c4892" stroke-width="2.4" opacity="0.40"/>
<path d="M113 728.6Q361 725.0 608 727.0" stroke="#64408a" stroke-width="3.1" opacity="0.38"/>
<path d="M943 721.7Q1177 718.2 1411 717.7" stroke="#c09ad4" stroke-width="1.9" opacity="0.48"/>
<path d="M-5 740.5Q222 742.9 449 740.5" stroke="#5c3a82" stroke-width="3.0" opacity="0.46"/>
<path d="M552 670.2Q642 672.1 733 670.6" stroke="#6c4892" stroke-width="2.1" opacity="0.29"/>
<path d="M324 771.3Q495 771.0 666 770.0" stroke="#64408a" stroke-width="1.3" opacity="0.47"/>
<path d="M41 680.5Q109 677.4 178 679.9" stroke="#64408a" stroke-width="2.4" opacity="0.36"/>
<path d="M778 733.9Q940 733.4 1102 732.4" stroke="#c09ad4" stroke-width="3.0" opacity="0.46"/>
<path d="M613 808.2Q725 810.6 837 808.9" stroke="#b48cca" stroke-width="1.8" opacity="0.37"/>
<path d="M183 762.1Q329 758.8 475 760.0" stroke="#745098" stroke-width="3.0" opacity="0.29"/>
<path d="M1099 812.5Q1203 811.8 1307 811.3" stroke="#6c4892" stroke-width="2.1" opacity="0.29"/>
<path d="M162 735.7Q290 736.1 418 733.9" stroke="#a884c2" stroke-width="1.2" opacity="0.38"/>
<path d="M554 704.4Q739 705.2 924 700.3" stroke="#64408a" stroke-width="1.7" opacity="0.27"/>
<path d="M856 802.0Q952 804.2 1048 802.2" stroke="#745098" stroke-width="2.3" opacity="0.35"/>
<path d="M325 735.5Q484 736.1 643 733.1" stroke="#b48cca" stroke-width="1.2" opacity="0.33"/>
<path d="M673 663.1Q785 660.7 897 661.2" stroke="#b48cca" stroke-width="2.3" opacity="0.35"/>
<path d="M80 805.5Q194 803.6 307 804.7" stroke="#c09ad4" stroke-width="1.6" opacity="0.33"/>
<path d="M577 806.5Q763 804.5 949 803.2" stroke="#caa6dc" stroke-width="1.2" opacity="0.35"/>
<path d="M828 690.6Q891 688.5 954 690.2" stroke="#5c3a82" stroke-width="2.8" opacity="0.28"/>
<path d="M953 721.5Q1112 720.6 1271 719.7" stroke="#6c4892" stroke-width="2.9" opacity="0.34"/>
<path d="M421 768.1Q608 764.3 795 765.7" stroke="#b48cca" stroke-width="3.0" opacity="0.44"/>
<path d="M744 721.2Q815 720.8 886 720.4" stroke="#6c4892" stroke-width="1.3" opacity="0.42"/>
<path d="M-76 679.5Q38 677.8 152 678.1" stroke="#745098" stroke-width="3.1" opacity="0.31"/>
<path d="M-79 700.6Q53 699.7 184 699.1" stroke="#6c4892" stroke-width="2.8" opacity="0.31"/>
<path d="M98 663.4Q322 662.2 545 662.3" stroke="#c09ad4" stroke-width="3.1" opacity="0.28"/>
<path d="M1025 793.1Q1116 793.7 1207 793.2" stroke="#5c3a82" stroke-width="2.6" opacity="0.29"/>
<path d="M954 757.3Q1023 758.3 1092 757.7" stroke="#6c4892" stroke-width="2.7" opacity="0.48"/>
<path d="M-60 744.6Q162 746.2 385 744.2" stroke="#6c4892" stroke-width="1.3" opacity="0.27"/>
<path d="M386 756.3Q638 752.4 890 753.9" stroke="#c09ad4" stroke-width="1.2" opacity="0.40"/>
<path d="M543 783.6Q752 783.8 962 782.2" stroke="#a884c2" stroke-width="1.3" opacity="0.33"/>
<path d="M174 693.1Q380 696.0 586 693.1" stroke="#5c3a82" stroke-width="3.0" opacity="0.27"/>
<path d="M703 696.8Q773 696.8 842 695.6" stroke="#caa6dc" stroke-width="1.5" opacity="0.44"/>
<path d="M1124 730.0Q1281 726.7 1438 726.7" stroke="#caa6dc" stroke-width="2.1" opacity="0.39"/>
<path d="M167 668.1Q405 671.6 644 669.9" stroke="#a884c2" stroke-width="2.2" opacity="0.27"/>
<path d="M399 817.1Q658 820.4 917 818.5" stroke="#b48cca" stroke-width="2.2" opacity="0.29"/>
<path d="M935 810.0Q1022 812.0 1108 809.3" stroke="#6c4892" stroke-width="3.0" opacity="0.37"/>
<path d="M1096 715.0Q1188 714.3 1280 714.8" stroke="#5c3a82" stroke-width="1.8" opacity="0.34"/>
<path d="M849 790.8Q910 788.6 970 791.0" stroke="#64408a" stroke-width="1.8" opacity="0.48"/>
<path d="M1157 711.3Q1295 710.1 1434 710.6" stroke="#caa6dc" stroke-width="1.8" opacity="0.51"/>
<path d="M706 656.8Q898 657.8 1091 653.1" stroke="#745098" stroke-width="1.9" opacity="0.30"/>
<path d="M925 810.5Q1162 812.6 1399 809.6" stroke="#6c4892" stroke-width="1.3" opacity="0.43"/>
<path d="M852 772.5Q1002 771.0 1152 772.0" stroke="#c09ad4" stroke-width="2.0" opacity="0.30"/>
<path d="M835 695.9Q946 695.2 1057 695.6" stroke="#a884c2" stroke-width="2.0" opacity="0.42"/>
<path d="M177 676.4Q270 676.7 362 676.9" stroke="#caa6dc" stroke-width="2.1" opacity="0.55"/>
<path d="M32 671.7Q131 668.6 229 670.4" stroke="#caa6dc" stroke-width="1.6" opacity="0.49"/>
<path d="M394 651.4Q628 649.7 862 651.4" stroke="#b48cca" stroke-width="2.3" opacity="0.40"/>
<path d="M575 709.2Q773 711.4 970 709.5" stroke="#c09ad4" stroke-width="2.5" opacity="0.37"/>
<path d="M928 721.4Q1051 719.6 1173 722.3" stroke="#a884c2" stroke-width="2.2" opacity="0.54"/>
<path d="M1069 660.4Q1315 659.4 1561 658.7" stroke="#64408a" stroke-width="1.5" opacity="0.31"/>
<path d="M942 813.2Q1024 815.2 1105 813.1" stroke="#64408a" stroke-width="1.3" opacity="0.39"/>
<path d="M1059 781.0Q1165 779.6 1272 780.6" stroke="#caa6dc" stroke-width="2.1" opacity="0.41"/>
<path d="M292 777.9Q372 776.3 452 778.3" stroke="#b48cca" stroke-width="1.8" opacity="0.25"/>
<path d="M718 726.3Q970 726.7 1222 727.4" stroke="#c09ad4" stroke-width="2.0" opacity="0.26"/>
<path d="M160 758.4Q231 759.5 302 758.7" stroke="#c09ad4" stroke-width="3.1" opacity="0.45"/>
<path d="M339 686.6Q405 687.3 472 685.8" stroke="#caa6dc" stroke-width="2.2" opacity="0.47"/>
<path d="M306 682.9Q560 681.6 814 683.5" stroke="#caa6dc" stroke-width="2.4" opacity="0.28"/>
<path d="M520 751.7Q760 749.7 999 752.9" stroke="#5c3a82" stroke-width="1.2" opacity="0.26"/>
<path d="M799 749.3Q942 747.7 1085 746.8" stroke="#745098" stroke-width="3.2" opacity="0.43"/>
<path d="M150 806.4Q276 808.2 401 807.1" stroke="#a884c2" stroke-width="3.2" opacity="0.50"/>
<path d="M17 723.2Q99 721.9 180 721.5" stroke="#6c4892" stroke-width="2.7" opacity="0.35"/>
<path d="M29 700.5Q249 698.5 470 700.2" stroke="#5c3a82" stroke-width="1.9" opacity="0.30"/>
<path d="M429 800.5Q495 802.2 561 800.6" stroke="#b48cca" stroke-width="2.8" opacity="0.39"/>
<path d="M-2 658.5Q97 657.5 196 658.1" stroke="#64408a" stroke-width="2.6" opacity="0.32"/>
<path d="M-75 701.8Q40 704.3 155 701.8" stroke="#64408a" stroke-width="1.7" opacity="0.26"/>
<path d="M1101 728.8Q1352 725.8 1604 725.9" stroke="#a884c2" stroke-width="2.2" opacity="0.29"/>
<path d="M296 649.5Q542 647.2 788 649.0" stroke="#caa6dc" stroke-width="2.8" opacity="0.39"/>
<path d="M405 749.3Q567 747.2 730 746.2" stroke="#5c3a82" stroke-width="1.9" opacity="0.39"/>
<path d="M1143 814.6Q1380 810.3 1616 811.0" stroke="#a884c2" stroke-width="3.1" opacity="0.55"/>
<path d="M491 677.4Q577 676.0 664 677.8" stroke="#64408a" stroke-width="1.8" opacity="0.44"/>
<path d="M235 695.5Q348 694.2 462 693.7" stroke="#c09ad4" stroke-width="3.0" opacity="0.30"/>
<path d="M410 746.3Q536 746.8 661 747.3" stroke="#b48cca" stroke-width="3.2" opacity="0.45"/>
<path d="M934 665.4Q1089 668.1 1244 665.8" stroke="#caa6dc" stroke-width="1.3" opacity="0.32"/>
<path d="M160 750.1Q386 747.7 612 745.2" stroke="#caa6dc" stroke-width="2.5" opacity="0.48"/>
<path d="M799 649.1Q986 645.1 1174 646.7" stroke="#64408a" stroke-width="1.7" opacity="0.30"/>
<path d="M172 749.9Q362 746.6 553 745.4" stroke="#6c4892" stroke-width="1.4" opacity="0.41"/>
<path d="M519 653.3Q678 654.3 837 651.6" stroke="#6c4892" stroke-width="1.4" opacity="0.41"/>
<path d="M427 675.8Q626 673.2 825 672.9" stroke="#745098" stroke-width="3.0" opacity="0.44"/>
<path d="M869 718.4Q933 719.3 996 718.5" stroke="#a884c2" stroke-width="1.2" opacity="0.31"/>
<path d="M936 801.3Q1080 802.8 1225 799.7" stroke="#c09ad4" stroke-width="1.3" opacity="0.29"/>
<path d="M411 672.2Q632 674.2 854 671.0" stroke="#6c4892" stroke-width="1.8" opacity="0.29"/>
<path d="M55 736.6Q300 737.4 545 734.6" stroke="#6c4892" stroke-width="2.9" opacity="0.33"/>
<path d="M309 655.4Q552 655.7 795 654.3" stroke="#c09ad4" stroke-width="2.9" opacity="0.44"/>
<path d="M163 753.6Q346 753.2 529 752.0" stroke="#c09ad4" stroke-width="1.4" opacity="0.37"/>
<path d="M1031 690.0Q1236 688.0 1441 685.4" stroke="#64408a" stroke-width="1.8" opacity="0.42"/>
<path d="M971 714.3Q1122 715.2 1273 714.4" stroke="#c09ad4" stroke-width="2.5" opacity="0.38"/>
<path d="M-51 724.0Q97 723.6 244 723.3" stroke="#a884c2" stroke-width="2.8" opacity="0.50"/>
<path d="M364 716.1Q437 717.4 511 715.2" stroke="#64408a" stroke-width="1.5" opacity="0.26"/>
<path d="M812 804.8Q935 805.0 1057 802.1" stroke="#6c4892" stroke-width="1.3" opacity="0.26"/>
<path d="M56 752.4Q254 752.8 453 748.5" stroke="#c09ad4" stroke-width="2.6" opacity="0.46"/>
<path d="M676 685.6Q902 682.7 1129 682.0" stroke="#5c3a82" stroke-width="2.2" opacity="0.29"/>
<path d="M245 804.4Q347 802.9 449 803.6" stroke="#c09ad4" stroke-width="2.5" opacity="0.37"/>
<path d="M387 695.3Q512 694.0 638 695.5" stroke="#64408a" stroke-width="1.9" opacity="0.41"/>
<path d="M638 796.4Q809 794.4 980 797.1" stroke="#5c3a82" stroke-width="1.9" opacity="0.43"/>
<path d="M101 711.9Q235 708.5 369 710.1" stroke="#b48cca" stroke-width="2.2" opacity="0.34"/>
<path d="M997 700.7Q1251 703.8 1504 702.2" stroke="#64408a" stroke-width="1.8" opacity="0.31"/>
<path d="M371 754.4Q514 752.7 658 751.1" stroke="#64408a" stroke-width="1.2" opacity="0.26"/>
<path d="M362 708.3Q443 708.2 525 707.0" stroke="#6c4892" stroke-width="2.9" opacity="0.34"/>
<path d="M912 675.0Q975 674.6 1038 674.9" stroke="#c09ad4" stroke-width="2.8" opacity="0.51"/>
<path d="M-66 716.3Q47 716.5 160 716.0" stroke="#a884c2" stroke-width="2.2" opacity="0.43"/>
<path d="M-80 731.8Q14 727.9 107 729.7" stroke="#c09ad4" stroke-width="2.8" opacity="0.27"/>
<path d="M1085 650.1Q1255 646.6 1425 646.8" stroke="#5c3a82" stroke-width="1.5" opacity="0.45"/>
<path d="M-20 700.6Q100 702.6 220 701.1" stroke="#64408a" stroke-width="2.1" opacity="0.34"/>
<path d="M732 803.1Q808 805.4 884 801.7" stroke="#b48cca" stroke-width="3.0" opacity="0.29"/>
<path d="M246 805.3Q495 803.3 743 799.7" stroke="#745098" stroke-width="3.1" opacity="0.32"/>
<path d="M548 800.0Q625 801.7 702 798.6" stroke="#6c4892" stroke-width="2.7" opacity="0.49"/>
<path d="M327 703.6Q563 704.1 799 699.7" stroke="#5c3a82" stroke-width="2.3" opacity="0.37"/>
<path d="M1103 649.1Q1168 650.9 1234 648.0" stroke="#5c3a82" stroke-width="1.4" opacity="0.41"/>
<path d="M-47 802.8Q42 804.5 131 801.0" stroke="#c09ad4" stroke-width="1.3" opacity="0.46"/>
<path d="M-27 671.5Q162 666.7 350 667.4" stroke="#745098" stroke-width="3.1" opacity="0.30"/>
<path d="M1009 738.8Q1202 740.0 1395 738.8" stroke="#c09ad4" stroke-width="1.4" opacity="0.31"/>
<path d="M925 653.9Q1155 655.4 1384 653.0" stroke="#745098" stroke-width="1.5" opacity="0.37"/>
<path d="M285 782.6Q474 779.9 663 780.1" stroke="#caa6dc" stroke-width="2.7" opacity="0.26"/>
<path d="M665 802.8Q879 800.5 1093 800.9" stroke="#5c3a82" stroke-width="2.2" opacity="0.26"/>
<path d="M-20 664.7Q133 665.5 287 663.8" stroke="#745098" stroke-width="1.2" opacity="0.29"/>
<path d="M1131 682.3Q1343 679.8 1555 677.3" stroke="#6c4892" stroke-width="2.4" opacity="0.49"/>
<path d="M636 810.7Q799 811.1 962 807.6" stroke="#6c4892" stroke-width="1.4" opacity="0.37"/>
<path d="M895 756.2Q972 757.9 1048 756.1" stroke="#745098" stroke-width="3.1" opacity="0.27"/>
<path d="M443 799.6Q652 798.5 861 798.9" stroke="#a884c2" stroke-width="2.2" opacity="0.52"/>
<path d="M209 712.5Q446 711.6 683 710.3" stroke="#64408a" stroke-width="1.9" opacity="0.34"/>
<path d="M740 674.4Q968 672.4 1197 674.3" stroke="#745098" stroke-width="1.5" opacity="0.39"/>
<path d="M215 726.5Q452 723.2 689 722.3" stroke="#6c4892" stroke-width="3.1" opacity="0.43"/>
<path d="M352 770.9Q532 772.2 713 768.0" stroke="#b48cca" stroke-width="2.5" opacity="0.30"/>
<path d="M104 681.2Q194 679.4 284 679.9" stroke="#b48cca" stroke-width="1.4" opacity="0.44"/>
<path d="M-38 683.1Q100 684.1 237 681.5" stroke="#745098" stroke-width="1.5" opacity="0.37"/>
<path d="M837 750.6Q978 750.6 1119 751.3" stroke="#5c3a82" stroke-width="2.5" opacity="0.46"/>
<path d="M714 758.9Q950 756.7 1185 757.7" stroke="#b48cca" stroke-width="1.8" opacity="0.39"/>
</g>
<g fill="#fff" filter="url(#bl2)">
<circle cx="202.6" cy="146.4" r="2.1"/>
<circle cx="298" cy="142" r="1.5"/>
<circle cx="367" cy="142" r="2.9"/>
<circle cx="408.7" cy="138.8" r="2.1"/>
<circle cx="544" cy="121.5" r="2.1"/>
<circle cx="663" cy="110.6" r="2.9"/>
<circle cx="697.5" cy="134" r="2.1"/>
<circle cx="458.5" cy="157" r="2.9"/>
<circle cx="512" cy="151" r="2.1"/>
<circle cx="637.7" cy="153.6" r="2.9"/>
<circle cx="674.8" cy="169" r="1.5"/>
<circle cx="320" cy="175" r="2.9"/>
<circle cx="391" cy="181.4" r="2.1"/>
<circle cx="581.6" cy="174.7" r="2.1"/>
<circle cx="538.6" cy="189" r="1.5"/>
<circle cx="224.5" cy="194.5" r="1.5"/>
<circle cx="302" cy="202" r="1.5"/>
<circle cx="448.4" cy="216.4" r="2.9"/>
<circle cx="588.3" cy="214.7" r="2.1"/>
<circle cx="658.3" cy="221.9" r="2.9"/>
<circle cx="620" cy="229" r="1.5"/>
<circle cx="237" cy="232" r="2.9"/>
<circle cx="352.7" cy="236" r="1.5"/>
<circle cx="393" cy="243.8" r="2.1"/>
<circle cx="518.8" cy="240.9" r="1.5"/>
<circle cx="293" cy="251.8" r="1.5"/>
<circle cx="582.4" cy="254.4" r="1.5"/>
<circle cx="199" cy="256" r="1.5"/>
<circle cx="280.6" cy="283.9" r="1.5"/>
<circle cx="517.5" cy="285.6" r="2.1"/>
<circle cx="590" cy="283.4" r="2.9"/>
<circle cx="670" cy="280.5" r="1.5"/>
<circle cx="216.5" cy="302.4" r="2.1"/>
<circle cx="308.8" cy="302" r="2.1"/>
<circle cx="411.7" cy="296.5" r="1.5"/>
<circle cx="456.8" cy="299.9" r="2.9"/>
<circle cx="636.4" cy="310.4" r="2.1"/>
<circle cx="229" cy="350" r="2.9"/>
<circle cx="342" cy="343.7" r="2.9"/>
<circle cx="465.6" cy="356.8" r="2.1"/>
<circle cx="536.5" cy="342" r="2.9"/>
<circle cx="596" cy="338.7" r="2.1"/>
<circle cx="670" cy="345.4" r="2.9"/>
<circle cx="746.9" cy="132.5" r="2.1"/>
<circle cx="791" cy="161" r="1.5"/>
<circle cx="886.8" cy="156.5" r="1.5"/>
<circle cx="955" cy="156.5" r="2.9"/>
<circle cx="996.8" cy="153" r="1.5"/>
<circle cx="1131" cy="135.5" r="1.5"/>
<circle cx="1099.7" cy="165.8" r="1.5"/>
<circle cx="1046" cy="171.3" r="2.9"/>
<circle cx="907.9" cy="190.7" r="2.9"/>
<circle cx="978.3" cy="196" r="2.1"/>
<circle cx="774" cy="197" r="2.9"/>
<circle cx="700" cy="202" r="2.1"/>
<circle cx="813" cy="208.8" r="1.5"/>
<circle cx="890" cy="217.7" r="1.5"/>
<circle cx="1036" cy="232" r="2.9"/>
<circle cx="1175.6" cy="230" r="2.1"/>
<circle cx="824.8" cy="248" r="2.9"/>
<circle cx="940" cy="252" r="1.5"/>
<circle cx="980.8" cy="260" r="2.1"/>
<circle cx="1106" cy="257" r="1.5"/>
<circle cx="881.8" cy="267.8" r="1.5"/>
<circle cx="1170" cy="270" r="1.5"/>
<circle cx="868.7" cy="300.7" r="1.5"/>
<circle cx="1104.8" cy="302.8" r="2.1"/>
<circle cx="1177" cy="300.7" r="2.9"/>
<circle cx="708.5" cy="319.7" r="2.9"/>
<circle cx="804.6" cy="319.7" r="2.1"/>
<circle cx="896.5" cy="319.7" r="2.1"/>
<circle cx="999" cy="313.8" r="1.5"/>
<circle cx="1044" cy="317" r="2.9"/>
<circle cx="745.6" cy="349.6" r="1.5"/>
<circle cx="929.8" cy="361.9" r="2.9"/>
<circle cx="1053" cy="375" r="2.1"/>
<circle cx="1123.8" cy="360.6" r="2.9"/>
<circle cx="1183" cy="356.8" r="2.1"/>
<circle cx="894" cy="105.5" r="1.5"/>
<circle cx="1005" cy="103.5" r="1.5"/>
</g>
<circle cx="254.9" cy="135" r="17" fill="url(#glow)"/>
<circle cx="629" cy="191" r="17" fill="url(#glow)"/>
<circle cx="562" cy="236.7" r="17" fill="url(#glow)"/>
<circle cx="843" cy="149" r="17" fill="url(#glow)"/>
<circle cx="1149.5" cy="253" r="17" fill="url(#glow)"/>
<circle cx="1083" cy="103" r="17" fill="url(#glow)"/><!-- heart -->
<circle cx="751" cy="262" r="86" fill="url(#hglow)"/>
<path d="M746.5 245.6C740 232 726 224 712 227C694 231 684 246 687 262C690 280 710 292 726 299C740 305 750 310 755.6 316.6C762 305 775 296 790 282C806 266 818 250 814 234C810 216 796 208 782 210C766 212 752 228 746.5 245.6Z" fill="#fff" stroke="#d6d4de" stroke-width="2"/>
<text x="721" y="270.500" font-family="Liberation Sans,sans-serif" font-size="10.500" fill="#5c3c72" textLength="55" lengthAdjust="spacingAndGlyphs">LOVE IS...</text>
<!-- moon -->
<path d="M1180.5 124.6C1186 140 1184 156 1176 165L1166.5 172L1172 176C1171 180 1172 184 1170 187C1160 202 1140 209 1118 207C1128 220 1146 224 1160 222C1185 218 1205 196 1207 170C1208 150 1197 132 1180.5 124.6Z" fill="url(#moon)" stroke="#b07020" stroke-width=".8"/>
<circle cx="1190" cy="172" r="3.6" fill="#f59a70" opacity=".8"/>
<path d="M1175 181C1179 185 1184 185 1188 181" stroke="#5a3010" stroke-width="1" fill="none"/>
<circle cx="1187.5" cy="161.5" r=".9" fill="#5a3010"/>
<!-- skyline dark buildings -->
<g fill="#221655">
<path d="M487 396H501.4V347.6H556V440H487Z"/>
<path d="M561.5 368.5L615.4 366.5V445H561.5Z"/>
<path d="M633 374H640.5V361H648V350H658V440H633Z"/>
<path d="M616 430H640V522H616Z"/>
<path d="M752.5 345H763.8V338.8H801.4V344H812.7V470H752.5Z"/>
<path d="M720 377H756V440H720Z"/>
<path d="M916.5 393H938V417H946.5V378.5H965.6V470H916.5Z"/>
<path d="M476 445H483V522H476Z"/>
<path d="M812 395H884V470H812Z"/>
</g>
<g fill="#4d4485">
<path d="M509 358h7v8h-7zM524 358h7v8h-7zM540.500 358h7v8h-7zM509 380h7v8h-7zM524 380h7v8h-7zM540.500 380h7v8h-7zM524 402h7v8h-7zM540.500 402h7v8h-7zM490.500 402h6v7h-6z"/>
<path d="M570.300 379h6.200v21h-6.200zM580.300 379h6.200v21h-6.200z"/>
<path d="M762.500 354h5.500v7h-5.500zM769.500 354h5.500v7h-5.500zM762.500 363h5.500v7h-5.500zM769.500 363h5.500v7h-5.500zM789.500 354h5.500v7h-5.500zM796.500 354h5.500v7h-5.500zM789.500 363h5.500v7h-5.500zM796.500 363h5.500v7h-5.500z"/>
<path d="M762.500 382.500h5.500v7h-5.500zM769.500 382.500h5.500v7h-5.500zM762.500 391.500h5.500v7h-5.500zM769.500 391.500h5.500v7h-5.500zM789.500 382.500h5.500v7h-5.500zM796.500 382.500h5.500v7h-5.500zM789.500 391.500h5.500v7h-5.500zM796.500 391.500h5.500v7h-5.500z"/>
<path d="M922 399h4v6h-4zM952 388h4v6h-4zM959.500 388h3.500v6h-3.500zM952 402h4v7h-4z"/>
</g>
<!-- billboard + light purple tower -->
<rect x="880.500" y="401" width="33" height="121" fill="#b07fd2"/>
<rect x="882.500" y="391.500" width="29" height="9.500" fill="#241858"/>
<rect x="896" y="391.500" width="2.500" height="9.500" fill="#9a68c4"/>
<rect x="893" y="362.500" width="20" height="26" fill="#7d4fb4"/>
<rect x="895.500" y="365" width="15" height="21" fill="#f6f4fa"/>
<path d="M894 422h9v13h-9zM893.500 455h8.500v11h-8.500z" fill="#f2e25a"/>
<!-- purple house 1 -->
<path d="M484.500 424L515 405L547.700 424V522H484.500Z" fill="url(#house)"/>
<path d="M515.500 390.500L554.500 417V425.500H546L515 408L486 425.500H477V417Z" fill="#4f1a7c"/>
<path d="M494 431.500h7.500v11.500h-7.500zM527.700 431.500h7.500v11.500h-7.500zM494 454h7.500v11h-7.500zM527.700 454h7.500v11h-7.500z" fill="#f6e94e"/>
<rect x="500.500" y="479.500" width="28" height="42.500" fill="#d86ab4"/>
<rect x="504" y="483.500" width="21" height="38.500" fill="#f8f6fb"/>
<path d="M509 513L518 492M507 508L511 499" stroke="#9a98a8" stroke-width="1.200" fill="none"/>
<!-- house 2 -->
<rect x="554" y="446" width="62.600" height="76" fill="#a163c6"/>
<path d="M564 465h10v15h-10zM598 465h10v15h-10zM564 490h10v14h-10zM598 490h10v14h-10z" fill="#f6e94e"/>
<!-- awning -->
<path d="M549 429H622L629 447C629 452 619 452 618 447C617 452 607 452 606 447C605 452 595 452 594 447C593 452 583 452 582 447C581 452 571 452 570 447C569 452 559 452 558 447C557 452 547 452 546 447C545 452 539 451 540 447Z" fill="#9866d0"/>
<path d="M559.500 429H570L570 447C569 452 559 452 558 447ZM580.500 429H591L594 447C593 452 583 452 582 447ZM601.500 429H612L618 447C617 452 607 452 606 447Z" fill="#f5a6e6"/>
<path d="M549 429L540 447C541 451 545 451 546 447L553 429Z" fill="#f5a6e6"/>
<!-- sign post -->
<rect x="628" y="454" width="10.500" height="46" fill="#f4f2fa"/>
<path d="M616.600 460h10v4h-10zM616.600 488h10v3.700h-10z" fill="#f2e25a"/>
<!-- lamps -->
<g fill="#f9f3a8"><circle cx="540.700" cy="450.800" r="3.600"/><circle cx="554" cy="451.600" r="3.600"/><circle cx="696" cy="448" r="3.400"/><circle cx="708" cy="448.600" r="3.600"/></g>
<!-- purple building G behind girl's arm -->
<rect x="706.600" y="430" width="70" height="92" fill="#8a4fc2"/>
<rect x="740" y="460" width="36" height="62" fill="#9a60cc"/>
<path d="M713.500 441h4.500v9h-4.500zM730.700 441h4.500v9h-4.500zM744.500 441h4.500v9h-4.500zM713.500 459h4.500v9h-4.500zM730.700 459h4.500v9h-4.500zM744.500 459h4.500v9h-4.500zM713.500 477h4.500v9h-4.500zM771 493h5v7h-5z" fill="#f4e070"/>
<rect x="722" y="497" width="21" height="19" fill="#ece6f4"/>
<!-- purple building F right -->
<rect x="913" y="468" width="48" height="54" fill="#9a5cc6"/>
<path d="M919 483h6v9.500h-6zM932.700 483h6v9.500h-6zM946 483h6v9.500h-6z" fill="#f4f0fa"/>
<rect x="921" y="498" width="34" height="24" fill="#6a30a0"/>
<rect x="924" y="500.500" width="28" height="18.500" fill="#faf8fd"/>
<!-- GIRL -->
<g stroke-linejoin="round">
<!-- legs -->
<path d="M636 643L649 643L645 738L630 738Z" fill="#f3b78c" stroke="#b8704a" stroke-width=".8"/>
<path d="M668 643L683 643L705.600 736L690.500 736Z" fill="#f3b78c" stroke="#b8704a" stroke-width=".8"/>
<!-- boots -->
<path d="M626 752L652 752C653 775 649 800 642 812C632 815 616 813 611 809C608 804 614 799 621 794C628 784 628 768 626 752Z" fill="#dd2d42" stroke="#8a1424" stroke-width=".8"/>
<path d="M691 749L714 747C722 768 731 795 727 812C720 818 702 818 696 814C698 795 696 770 691 749Z" fill="#dd2d42" stroke="#8a1424" stroke-width=".8"/>
<g fill="#fff"><circle cx="629" cy="763" r="2.800"/><circle cx="627.500" cy="779" r="2.800"/><circle cx="700.500" cy="766" r="2.800"/><circle cx="703" cy="782" r="2.800"/></g>
<rect x="620.500" y="735" width="35" height="21" rx="8" fill="#fff" stroke="#c8b0b8" stroke-width=".6"/>
<rect x="684.500" y="731" width="31" height="21" rx="8" fill="#fff" stroke="#c8b0b8" stroke-width=".6"/>
<!-- purple bag -->
<path d="M699 508L712 505L746.600 545.300L730.300 550.300Z" fill="#4c24a2" stroke="#3c1c84" stroke-width=".7"/>
<path d="M699 508L730.300 550.300L730.300 623L699 590.400Z" fill="#6738ba" stroke="#3c1c84" stroke-width=".8"/>
<path d="M730.300 550.300L746.600 545.300L746.600 615.500L730.300 623Z" fill="#7c4ccc" stroke="#3c1c84" stroke-width=".8"/>
<path d="M699 581L730.300 552.500V560.500L699 589Z" fill="#7ea4d0"/><path d="M708 600.500L730.300 581V588.500L713 604.500Z" fill="#a9b8e6"/>
<path d="M703 520C704 505 714 492 724 490M728 548C730 528 730 506 726 492M714 532C716 514 720 498 726 491" stroke="#d6d2e0" stroke-width="2" fill="none"/>
<!-- arms -->
<path d="M642 446L588 553" stroke="#f6bce9" stroke-width="11.500" stroke-linecap="round" fill="none"/>
<path d="M681 438L724 503L760 460" stroke="#f6bce9" stroke-width="11" stroke-linecap="round" stroke-linejoin="round" fill="none"/>
<!-- hands -->
<path d="M756 458C754 450 758 444 762 440L760 434L765 441L768 432L770 441L776 434L774 444L782 441L775 450C774 458 766 462 756 458Z" fill="#fbd8ac" stroke="#b8704a" stroke-width=".7"/>
<ellipse cx="580.500" cy="561" rx="7" ry="8.500" transform="rotate(25 580.500 561)" fill="#fbd8ac" stroke="#b8704a" stroke-width=".7"/>
<!-- dress -->
<path d="M645 437L670 435L684 452L690.500 500L700 596L628 596L641.600 500L644 452Z" fill="#f9c3ee" stroke="#c47ab0" stroke-width=".7"/>
<path d="M672 440L682 452L688 500L697 596L686 596L680 500Z" fill="#f49cda" opacity=".75"/>
<path d="M615 636L628 610L700 610L705 641L698 645L692 640L684 646L676 641L668 646L660 641L652 645L644 640L636 643L628 637L621 640Z" fill="#ec4688" stroke="#a01858" stroke-width=".7"/><path d="M640 614L634 640M656 614L654 642M672 614L674 642M688 614L694 640" stroke="#b81c64" stroke-width=".8" fill="none"/>
<rect x="625.500" y="591.500" width="76" height="21.500" rx="9" fill="#fff" stroke="#d0b8c8" stroke-width=".6"/>
<rect x="645" y="442" width="27" height="8" fill="#5c1a42"/>
<path d="M646 450.600L667.600 450.600L655.500 471Z" fill="#f070ba"/>
<path d="M657.400 497C650 490 645.500 485 646.500 479.500C647.500 474.500 654 473.500 657.400 479C660.800 473.500 667.300 474.500 668.300 479.500C669.300 485 664.800 490 657.400 497Z" fill="#f062ac"/>
<!-- face -->
<ellipse cx="654.500" cy="401.500" rx="20.500" ry="18.500" fill="#fcdcb2" stroke="#a8603a" stroke-width=".8"/>
<circle cx="633.500" cy="394.500" r="3.300" fill="#fcdcb2" stroke="#a8603a" stroke-width=".7"/>
<ellipse cx="665.500" cy="409" rx="4.500" ry="3.300" fill="#f0805c" opacity=".75"/>
<ellipse cx="639" cy="402" rx="2.500" ry="2.500" fill="#f0805c" opacity=".6"/>
<path d="M640 404C645 414 660 414 667 405" stroke="#7a2c1c" stroke-width="1.300" fill="none"/>
<path d="M646 397C648 393 652 393 654 396" stroke="#3a1c14" stroke-width="1.200" fill="none"/>
<circle cx="668" cy="402" r="1.500" fill="#2a1410"/>
<!-- scarf -->
<path d="M636 414C633 424 638 432 646 436.500C656 441.500 671 440.500 678 434C682 428 681 419 676 412C668 424 650 427 636 414Z" fill="#f274bc" stroke="#8a2c5c" stroke-width=".7"/>
<path d="M642.500 419L640 432M652 423L651 438M662 424.500L663 439M671 421L675 434" stroke="#4e1a3a" stroke-width="4.600" fill="none"/>
<!-- hair -->
<path d="M634 392C634 380 644 366 660 362.500C672 359.500 686 361 698 365.600C708 369.500 714 373 719 375.500C728 380 736 383 744 382.500C754 382 764 377 771.600 371.200C769 378 765 384 760 389.700C756 396 752 401 747.500 406.700C742 412 737 417 730.500 420.800C725 425 719 428 712 430.700C706 433 700 434.500 693.700 434.300C690 434 688 433 686.600 430.700C684 427 682 423 681 418C679 413 677.500 408 676.700 398C670 396 664 394 658.200 391C653 388 649 385 645.500 382.600C641 384 637 388 634 392Z" fill="#f6de86" stroke="#a07830" stroke-width=".8"/>
<path d="M657 383C675 396 705 402 738 397M706 376C722 386 742 388 758 384M684 400C700 410 722 412 742 402M686 414C700 422 716 420 730 414" stroke="#a87c38" stroke-width=".9" fill="none"/>
<!-- shopping bag -->
<path d="M557 578C559 566 572 560 581 567C588 573 592 582 593 591" stroke="#8c7c8c" stroke-width="2.200" fill="none"/>
<path d="M538.300 565.800L609.700 595.900L579.600 684.200L506.300 652.300Z" fill="#f18ba2" stroke="#b84a66" stroke-width="1"/>
<path d="M553 607L557.800 619.800L572 619L561 628L565.500 642L553 634L541 643L545 629L533.500 621L548 620.500Z" fill="#f9ee86"/>
<text x="528" y="633" font-family="Liberation Sans,sans-serif" font-size="9" fill="#5a2a3a" textLength="61" lengthAdjust="spacingAndGlyphs" transform="rotate(5 558 630)">SHOPPING</text>
<path d="M560 668C575 664 586 656 592 646M566 674C578 670 588 662 594 652" stroke="#e0607c" stroke-width="1" fill="none"/>
</g>
<!-- BOY -->
<defs>
<clipPath id="legL"><path d="M817 637L841.500 637L839.600 760L815 760Z"/></clipPath>
<clipPath id="legR"><path d="M871.600 637L894 637L909 754L886.600 754Z"/></clipPath>
</defs>
<g stroke-linejoin="round">
<!-- legs -->
<g clip-path="url(#legL)"><rect x="810" y="630" width="40" height="135" fill="#b58cda"/><path d="M810 651h40v11h-40zM810 674h40v11h-40zM810 697h40v11h-40zM810 720h40v11h-40zM810 743h40v11h-40z" fill="#3a2a62"/></g>
<g clip-path="url(#legR)"><rect x="865" y="630" width="50" height="130" fill="#b58cda"/><path d="M865 640l50 -3v11l-50 3zM865 664l50 -4v11l-50 4zM865 688l50 -5v11l-50 5zM865 712l50 -6v11l-50 6zM865 736l50 -7v11l-50 7z" fill="#3a2a62"/></g>
<!-- boots -->
<path d="M817 768L840 768L840 819.500L789 819.500C789 812 800 806 812 800C818 790 817 780 817 768Z" fill="#a98873" stroke="#6a4a3c" stroke-width=".8"/>
<path d="M890 764L914 762C918 780 926 800 924 819.500L877 819.500C880 810 890 806 896 798C896 788 892 776 890 764Z" fill="#a98873" stroke="#6a4a3c" stroke-width=".8"/>
<rect x="812.500" y="756.500" width="29.500" height="14.500" rx="6" fill="#fff" stroke="#c8b8c8" stroke-width=".6"/>
<rect x="886" y="751.500" width="31" height="15.500" rx="6.500" fill="#fff" stroke="#c8b8c8" stroke-width=".6"/>
<!-- scarf tail -->
<path d="M868 405C880 422 892 447 914 456C928 461 942 462 958 461" stroke="#3b1a36" stroke-width="27" fill="none"/><ellipse cx="958" cy="461" rx="4.500" ry="13.500" fill="#3b1a36"/>
<path d="M868 405C880 422 892 447 914 456C928 461 942 462 958 461" stroke="#e9cf72" stroke-width="27" stroke-dasharray="10 13" stroke-dashoffset="-2" fill="none"/>
<!-- coat -->
<path d="M829 428L862 426L872 416C886 440 900 478 905 505L906 618C890 634 860 641 840 637L836 628L815 630L828 560Z" fill="#f7f6fb" stroke="#8a8498" stroke-width=".8"/>
<path d="M870 424C880 450 892 480 897 506" stroke="#a8a2b8" stroke-width="1" fill="none"/>
<path d="M868 440C874 470 880 500 882 540" stroke="#d0ccdc" stroke-width="2.500" fill="none"/>
<path d="M880 600C870 615 860 622 848 626" stroke="#d4d0e0" stroke-width="3" fill="none"/>
<path d="M836 628L838 600" stroke="#6a6478" stroke-width="1" fill="none"/>
<path d="M856 562C856 580 868 586 880 582C886 578 888 568 886 558Z" fill="#fbfaff" stroke="#9a8aa8" stroke-width=".9"/>
<path d="M870 580C863 574 860 570 861.500 566C863 562.500 868 563 870 567C872 562.500 877 562.500 878.500 566C880 570 877 574 870 580Z" fill="#5c9aa6"/>
<circle cx="842.500" cy="440" r="3.500" fill="#9aa0b4" stroke="#5a6078" stroke-width=".7"/>
<!-- hand under box -->
<ellipse cx="840" cy="553" rx="11.500" ry="9" fill="#fbd8b4" stroke="#a8603a" stroke-width=".7"/>
<!-- yellow box -->
<path d="M756 516L823 540L880.400 509.700L815 488Z" fill="#f9cc50" stroke="#a86a10" stroke-width=".8"/>
<path d="M756 516L823 540L823 556.500L756 530.500Z" fill="#f2ab2c" stroke="#a86a10" stroke-width=".8"/>
<path d="M823 540L880.400 509.700L880.400 523L823 556.500Z" fill="#ec9f24" stroke="#a86a10" stroke-width=".8"/>
<!-- teal box -->
<path d="M778.300 473.900L816.600 488.200L817.400 526.500L779 508Z" fill="#11a195" stroke="#0a5c5c" stroke-width=".8"/>
<path d="M816.600 488.200L858.800 468.600L858.800 508L817.400 526.500Z" fill="#19b8a6" stroke="#0a5c5c" stroke-width=".8"/>
<path d="M774.300 464.300L816.600 481L860.400 460.300L820 446Z" fill="#22c6b2" stroke="#0a5c5c" stroke-width=".8"/>
<path d="M774.300 464.300L816.600 481L816.600 488.700L775 472.300Z" fill="#16aa9e" stroke="#0a5c5c" stroke-width=".8"/>
<path d="M816.600 481L860.400 460.300L860.400 468.300L816.600 488.700Z" fill="#1cbcaa" stroke="#0a5c5c" stroke-width=".8"/>
<!-- bow -->
<path d="M810 462L800 466L778.300 490.600L791 497.500L808 474Z" fill="#ee2c3e" stroke="#a01020" stroke-width=".6"/>
<path d="M818 462L827 465L845.300 493.800L832.500 500L820 476Z" fill="#ee2c3e" stroke="#a01020" stroke-width=".6"/>
<path d="M814 456C806 446 792 440 783 443C777 447 778 458 784 465C794 469 806 464 814 456Z" fill="#f23446" stroke="#a01020" stroke-width=".7"/>
<path d="M815 456C822 445 836 440 846 442.500C852 447 851 459 846 467C836 470 824 465 815 456Z" fill="#f23446" stroke="#a01020" stroke-width=".7"/>
<ellipse cx="814.500" cy="457" rx="4.600" ry="6.500" fill="#f23a48" stroke="#a01020" stroke-width=".6"/>
<!-- face -->
<ellipse cx="839" cy="394.500" rx="25" ry="20.500" fill="#fde1c2" stroke="#a8603a" stroke-width=".8"/>
<circle cx="861" cy="399" r="3.500" fill="#fde1c2" stroke="#a8603a" stroke-width=".7"/>
<ellipse cx="846" cy="397" rx="5" ry="3.600" fill="#f0785c" opacity=".7"/>
<ellipse cx="821" cy="397" rx="3" ry="3" fill="#f0785c" opacity=".5"/>
<path d="M822 401C828 411 846 411 853 400" stroke="#6a2418" stroke-width="1.300" fill="none"/>
<path d="M826 392C830 395 832 397 829 399" stroke="#3a1c14" stroke-width="1.100" fill="none"/>
<circle cx="822" cy="388" r="1.700" fill="#1a1010"/><circle cx="854" cy="392" r="1.700" fill="#1a1010"/>
<!-- scarf neck -->
<path d="M825 411C831 427 852 431 870 415" stroke="#3b1a36" stroke-width="13" fill="none"/>
<path d="M825 411C831 427 852 431 870 415" stroke="#e9cf72" stroke-width="13" stroke-dasharray="8 10" stroke-dashoffset="-6" fill="none"/>
<!-- hair -->
<path d="M814 379.500C811 372 811.500 366 813.200 361.300C814 355 816 350 819.800 346.500L826.400 336.600L831.400 341.500C837 336 843 333.500 849.600 333.300C858 332 866 333 874.300 334C881 335 888 336 894.200 336.600C889 339 884 341 879.300 342.300C885 343 890 345 894.200 348C900 349.500 905 351.500 910.700 353.900C906 358 902 363 899 368C895 374 891 379 885.900 382.800C881 387 876 391 871 394.400L866 391C864 387 862 383 861 379.500L857.800 371.300C852 375 847 377.500 841.300 379.500C836 381.500 830 382.500 824.800 382.800C821 382.500 817 381.500 814 379.500Z" fill="url(#bhair)" stroke="#5a3428" stroke-width=".8"/>
<path d="M857.800 371.300C868 362 886 355 910.700 353.900C906 358 902 363 899 368C895 374 891 379 885.900 382.800C881 387 876 391 871 394.400L866 391C864 387 862 383 861 379.500Z" fill="#8e5e8a" opacity=".5"/>
<path d="M836 350C852 343 872 342 892 346M842 364C858 354 880 351 902 355M852 374C866 366 884 362 900 362" stroke="#6a4038" stroke-width=".9" fill="none"/>
<circle cx="817.700" cy="369" r="3" fill="#fff"/>
</g>
</g></g>
<path d="M198 102.500H1198.500" stroke="#fdf4fa" stroke-width="1" fill="none"/><path d="M198 821H1198.500" stroke="#fbeaf4" stroke-width="2" fill="none"/>
<path d="M197 103H1198.500" stroke="#981236" stroke-width="2" stroke-dasharray="3 3" fill="none"/>
<path d="M200 821H1198.500" stroke="#c41a40" stroke-width="2" stroke-dasharray="3 3" fill="none"/>
</svg>

<div id="status" class="abs"><span style="left:0">就绪</span><b style="left:849px"></b><span style="left:852px"><i>004. JPG</i></span><b style="left:1000px"></b><span style="left:1003px">随机 <i style="margin-left:2px">1000ms</i></span></div>
<div class="abs" style="left:1066.500px;top:828px;width:120px;font:bold 22.3px/26px 'Liberation Sans','Noto Sans CJK SC',sans-serif;color:rgba(118,204,78,.62);white-space:nowrap;letter-spacing:0">绿色资源网</div>
<div class="abs" style="left:1067px;top:852px;width:120px;font:13.7px/16px 'Liberation Sans',sans-serif;color:rgba(118,204,78,.55);white-space:nowrap">www.downcc.com</div>

</body>
</html>
